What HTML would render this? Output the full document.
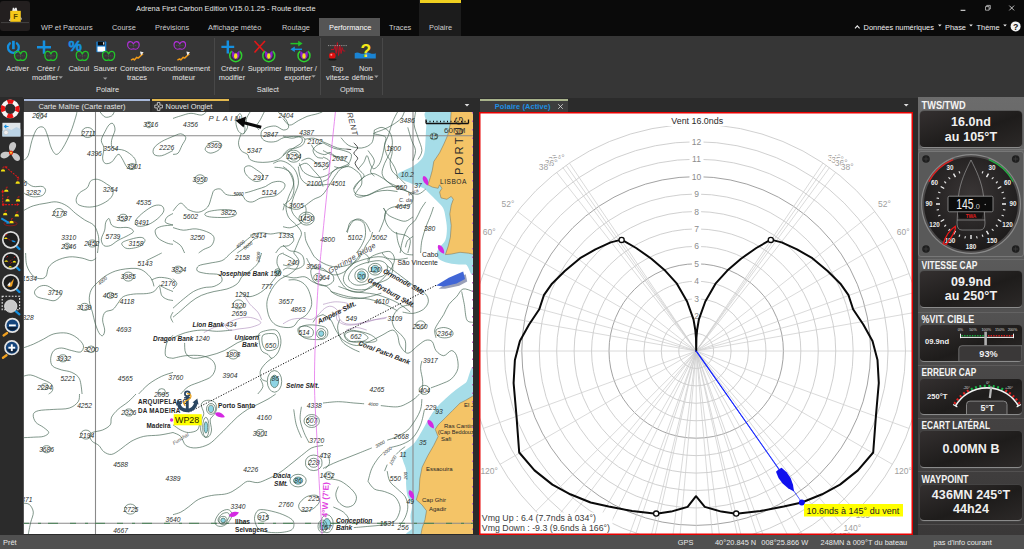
<!DOCTYPE html>
<html><head><meta charset="utf-8"><title>Adrena</title>
<style>
*{box-sizing:border-box;margin:0;padding:0}
html,body{width:1024px;height:549px;overflow:hidden;background:#2b2b2b;font-family:"Liberation Sans","DejaVu Sans",sans-serif;}
.abs{position:absolute}
#title{left:0;top:0;width:1024px;height:36px;background:#0a0a0a}
#title .t{position:absolute;color:#e6e6e6;font-size:7.4px;white-space:nowrap}
.tab{position:absolute;top:18.6px;height:18px;line-height:18px;color:#cfcfcf;font-size:7.4px;text-align:center;white-space:nowrap}
#ribbon{left:0;top:36px;width:1024px;height:61.6px;background:#363636}
.rl{position:absolute;color:#e4e4e4;font-size:7.4px;line-height:9px;text-align:center;white-space:nowrap;transform:translateX(-50%)}
.sep{position:absolute;top:38px;width:1px;height:57px;background:#4a4a4a}
#left{left:0;top:97px;width:23px;height:437px;background:#2b2b2b}
#status{left:0;top:535px;width:1024px;height:14px;background:#505050;color:#e8e8e8;font-size:7.4px;line-height:16.6px}
#status span{position:absolute;white-space:nowrap}
.rh{position:absolute;left:3.5px;color:#f4f4f4;font-weight:bold;font-size:9.4px;line-height:11px;letter-spacing:-0.36px;white-space:nowrap;transform:scaleY(1.12);transform-origin:left center}
.rb{position:absolute;left:2px;width:102px;border-radius:4px;background:linear-gradient(160deg,#343030 0%,#1e1c1b 55%,#2c2928 100%);border-bottom:1px solid #8a8a8a;box-shadow:0 0 0 0.5px #4a4a4a;overflow:hidden}
.rv{position:absolute;left:0;width:102px;text-align:center;color:#f0f0f0;font-weight:bold;line-height:16px;white-space:nowrap;letter-spacing:0.1px}
.ts{color:#e6e6e6;font-size:7.4px;line-height:10px;white-space:nowrap}
</style></head><body>
<div id="title" class="abs">
 <div class="abs" style="left:0;top:1px;width:30px;height:30px;background:#231f1f;border-radius:3px"></div>
 <svg class="abs" style="left:0;top:0" width="32" height="34" viewBox="0 0 32 34"><path d="M1 22.6H29" stroke="#5c5c5c" stroke-width="0.6"/><path d="M12.2 11L12.8 7.8H14.2L14.6 9.6L15.2 7.8H16.6L17.4 11Z" fill="#eee"/><rect x="10.2" y="10.8" width="10.6" height="11" fill="#f7c81a"/><path d="M9 21l1.4 -3.5v3.5zM22 19.5l-1.3 -3v3z" fill="#ddd"/><text x="15.4" y="19.4" font-size="7.4" font-weight="bold" fill="#5a4600" text-anchor="middle">F</text></svg>
 <div class="t" style="left:136px;top:4.2px">Adrena First Carbon Edition V15.0.1.25 - Route directe</div>
 <div class="abs" style="left:319px;top:18px;width:61px;height:18px;background:#555"></div>
 <div class="abs" style="left:419px;top:0;width:42px;height:36px;background:#1c1c1c"></div>
 <div class="abs" style="left:419.5px;top:0;width:41.5px;height:2.5px;background:#f0d020"></div>
 <div class="tab" style="left:41px;">WP et Parcours</div>
 <div class="tab" style="left:112px;">Course</div>
 <div class="tab" style="left:155px;">Prévisions</div>
 <div class="tab" style="left:208px;">Affichage météo</div>
 <div class="tab" style="left:282px;">Routage</div>
 <div class="tab" style="left:329px;color:#fff">Performance</div>
 <div class="tab" style="left:389px;">Traces</div>
 <div class="tab" style="left:429px;">Polaire</div>

 <svg class="abs" style="left:840px;top:0" width="184" height="36" viewBox="840 0 184 36"><path d="M960.6 10.3H965.4" stroke="#eee" stroke-width="1"/><path d="M985.5 6.6h3.6v3.6h-3.6zM986.7 6.6V5.4H990.3V9H989.1" fill="none" stroke="#ddd" stroke-width="0.7"/><path d="M1009.3 5.6L1014.1 10.4M1014.1 5.6L1009.3 10.4" stroke="#eee" stroke-width="0.8"/>
 <path d="M855 28.3L857.3 25.8L859.6 28.3" fill="none" stroke="#eee" stroke-width="1.1"/>
 <path d="M938 24.6h3.6l-1.8 2zM969.2 24.6h3.6l-1.8 2zM1003.2 24.6h3.6l-1.8 2z" fill="#eee"/>
 <circle cx="1015.6" cy="26.4" r="5" fill="#f4f4f4"/><text x="1015.6" y="29.6" font-size="8.8" font-weight="bold" fill="#111" text-anchor="middle">?</text></svg>
 <div class="t" style="left:863.6px;top:22.6px;color:#f0f0f0">Données numériques</div>
 <div class="t" style="left:945px;top:22.6px;color:#f0f0f0">Phase</div>
 <div class="t" style="left:976.6px;top:22.6px;color:#f0f0f0">Thème</div>
</div>
<div id="ribbon" class="abs"><svg class="abs" style="left:0;top:0" width="420" height="61" viewBox="0 36 420 61">
<path d="M9.9 43.3A5.4 5.4 0 1 0 16.9 43.3" fill="none" stroke="#1590e0" stroke-width="2.3" stroke-linecap="round"/><path d="M13.4 40.8V49.2" stroke="#1590e0" stroke-width="2.7" stroke-linecap="butt"/>
<path d="M20.60 54.10C21.80 50.20 26.70 50.20 26.70 55.20C26.70 59.20 23.60 61.40 20.60 59.90C17.60 61.40 14.50 59.20 14.50 55.20C14.50 50.20 19.40 50.20 20.60 54.10Z" fill="none" stroke="#22c32a" stroke-width="1.3" stroke-linejoin="round"/><path d="M16.60 55.80H24.60M20.60 54.20V58.80" stroke="#5c5c5c" stroke-width="0.6" stroke-dasharray="1.2 0.6"/>
<path d="M37 47.25H51M44 40.4V53.8" stroke="#1590e0" stroke-width="2.5"/>
<path d="M50.90 54.10C52.10 50.20 57.00 50.20 57.00 55.20C57.00 59.20 53.90 61.40 50.90 59.90C47.90 61.40 44.80 59.20 44.80 55.20C44.80 50.20 49.70 50.20 50.90 54.10Z" fill="none" stroke="#22c32a" stroke-width="1.3" stroke-linejoin="round"/><path d="M46.90 55.80H54.90M50.90 54.20V58.80" stroke="#5c5c5c" stroke-width="0.6" stroke-dasharray="1.2 0.6"/>
<text x="75.1" y="51" font-size="15.4" font-weight="bold" fill="#1590e0" stroke="#1590e0" stroke-width="0.5" text-anchor="middle" textLength="13.4" lengthAdjust="spacingAndGlyphs">%</text>
<path d="M82.30 54.10C83.50 50.20 88.40 50.20 88.40 55.20C88.40 59.20 85.30 61.40 82.30 59.90C79.30 61.40 76.20 59.20 76.20 55.20C76.20 50.20 81.10 50.20 82.30 54.10Z" fill="none" stroke="#22c32a" stroke-width="1.3" stroke-linejoin="round"/><path d="M78.30 55.80H86.30M82.30 54.20V58.80" stroke="#5c5c5c" stroke-width="0.6" stroke-dasharray="1.2 0.6"/>
<rect x="96.3" y="41.6" width="10" height="10.6" rx="0.6" fill="#1a7fd0"/><rect x="97.8" y="41.6" width="7" height="3.8" fill="#0a0a0a"/><rect x="103" y="42.2" width="1.3" height="2.4" fill="#ddd"/><rect x="97.5" y="46.6" width="7.6" height="5" fill="#fff"/>
<path d="M108.60 54.10C109.80 50.20 114.70 50.20 114.70 55.20C114.70 59.20 111.60 61.40 108.60 59.90C105.60 61.40 102.50 59.20 102.50 55.20C102.50 50.20 107.40 50.20 108.60 54.10Z" fill="none" stroke="#22c32a" stroke-width="1.3" stroke-linejoin="round"/><path d="M104.60 55.80H112.60M108.60 54.20V58.80" stroke="#5c5c5c" stroke-width="0.6" stroke-dasharray="1.2 0.6"/>
<path d="M133.40 43.98C134.54 40.71 139.20 40.71 139.20 44.90C139.20 48.24 136.25 50.09 133.40 48.83C130.55 50.09 127.60 48.24 127.60 44.90C127.60 40.71 132.26 40.71 133.40 43.98Z" fill="none" stroke="#b030d8" stroke-width="1.1" stroke-linejoin="round"/><path d="M129.60 45.40H137.20M133.40 44.06V47.91" stroke="#5c5c5c" stroke-width="0.6" stroke-dasharray="1.2 0.6"/>
<path d="M131 60.1l2.2 -1.2l1.2 1l2.4 -2.6l1.4 0.8l2.8 -2.6l2 -1.6" fill="none" stroke="#f09a18" stroke-width="1.5" stroke-linejoin="round"/><path d="M140 51.6l3.6 0.6l-2.6 3.2z" fill="#eee"/>
<path d="M179.80 43.98C180.94 40.71 185.60 40.71 185.60 44.90C185.60 48.24 182.65 50.09 179.80 48.83C176.95 50.09 174.00 48.24 174.00 44.90C174.00 40.71 178.66 40.71 179.80 43.98Z" fill="none" stroke="#b030d8" stroke-width="1.1" stroke-linejoin="round"/><path d="M176.00 45.40H183.60M179.80 44.06V47.91" stroke="#5c5c5c" stroke-width="0.6" stroke-dasharray="1.2 0.6"/>
<path d="M177.4 60.1l2.2 -1.2l1.2 1l2.4 -2.6l1.4 0.8l2.8 -2.6l2 -1.6" fill="none" stroke="#f09a18" stroke-width="1.5" stroke-linejoin="round"/><path d="M186.4 51.6l3.6 0.6l-2.6 3.2z" fill="#eee"/>
<path d="M221.4 46.9H234.2M227.8 40.4V53.6" stroke="#1590e0" stroke-width="2.4"/>
<path d="M231.79999999999998 51.1A6 6 0 1 0 239.6 51.1" fill="none" stroke="#2fd030" stroke-width="1.5"/><path d="M232.29999999999998 50.8Q230.7 56.4 234.5 59.4L235.7 53.9ZM239.1 50.8Q240.7 56.4 236.89999999999998 59.4L235.7 53.9Z" fill="#8a20d0"/><ellipse cx="235.7" cy="56.199999999999996" rx="1.7" ry="2.9" fill="#f5e020"/>
<path d="M254.5 41L265 52.5M265 41L254.5 52.5" stroke="#e01818" stroke-width="1.6"/>
<path d="M264.90000000000003 51.1A6 6 0 1 0 272.7 51.1" fill="none" stroke="#2fd030" stroke-width="1.5"/><path d="M265.40000000000003 50.8Q263.8 56.4 267.6 59.4L268.8 53.9ZM272.2 50.8Q273.8 56.4 270.0 59.4L268.8 53.9Z" fill="#8a20d0"/><ellipse cx="268.8" cy="56.199999999999996" rx="1.7" ry="2.9" fill="#f5e020"/>
<path d="M290.5 43.6H299.5" stroke="#22c32a" stroke-width="1.5"/><path d="M298.2 40.8L302.6 43.6L298.2 46.4Z" fill="#22c32a"/>
<path d="M293.5 49.3H302" stroke="#1590e0" stroke-width="1.5"/><path d="M294.8 46.5L290.4 49.3L294.8 52.1Z" fill="#1590e0"/>
<path d="M300.1 51.1A6 6 0 1 0 307.9 51.1" fill="none" stroke="#2fd030" stroke-width="1.5"/><path d="M300.6 50.8Q299 56.4 302.8 59.4L304 53.9ZM307.4 50.8Q309 56.4 305.2 59.4L304 53.9Z" fill="#8a20d0"/><ellipse cx="304" cy="56.199999999999996" rx="1.7" ry="2.9" fill="#f5e020"/>
<path d="M331 49.5h3l1 -4l1.2 8l1.2 -11l1.2 13l1.3 -10l1.2 8l1 -6l1.2 3.5h2" fill="none" stroke="#c01020" stroke-width="0.9"/><path d="M328 45.6H347" stroke="#bbb" stroke-width="0.7" stroke-dasharray="1.2 1"/>
<circle cx="332.3" cy="55.8" r="3.3" fill="#e01010"/><circle cx="331.3" cy="54.8" r="1" fill="#ff9a9a"/><ellipse cx="332.5" cy="59.6" rx="4" ry="1" fill="#1a1a1a"/>
<path d="M354.7 53.2q2.6 -1.2 5.2 0t5.2 0t5.2 0t5.5 0V58.4H354.7Z" fill="#1a84d4"/>
<text x="365.8" y="56.6" font-size="17.5" font-weight="bold" fill="#f5e818" text-anchor="middle">?</text>
<path d="M58.5 76.3h4.4l-2.2 2.4z" fill="#9a9a9a"/>
<path d="M103.0 77.39999999999999h4.4l-2.2 2.4z" fill="#9a9a9a"/>
<path d="M311.3 75.3h4.4l-2.2 2.4z" fill="#9a9a9a"/>
<path d="M374.1 75.6h4.4l-2.2 2.4z" fill="#9a9a9a"/>
</svg>
<div class="rl" style="left:17.6px;top:28.3px">Activer</div>
<div class="rl" style="left:48.2px;top:28.3px">Créer /</div>
<div class="rl" style="left:45.2px;top:36.5px">modifier</div>
<div class="rl" style="left:78.8px;top:28.3px">Calcul</div>
<div class="rl" style="left:105.2px;top:28.3px">Sauver</div>
<div class="rl" style="left:137px;top:28.3px">Correction</div>
<div class="rl" style="left:137px;top:36.5px">traces</div>
<div class="rl" style="left:183.6px;top:28.3px">Fonctionnement</div>
<div class="rl" style="left:183.8px;top:36.5px">moteur</div>
<div class="rl" style="left:107.5px;top:48.6px">Polaire</div>
<div class="rl" style="left:232.2px;top:28.3px">Créer /</div>
<div class="rl" style="left:232px;top:36.5px">modifier</div>
<div class="rl" style="left:264.7px;top:28.3px">Supprimer</div>
<div class="rl" style="left:301px;top:28.3px">Importer /</div>
<div class="rl" style="left:297.7px;top:36.5px">exporter</div>
<div class="rl" style="left:267.8px;top:48.6px">Sailect</div>
<div class="rl" style="left:337.5px;top:28.3px">Top</div>
<div class="rl" style="left:337.6px;top:36.5px">vitesse</div>
<div class="rl" style="left:365.7px;top:28.3px">Non</div>
<div class="rl" style="left:362.6px;top:36.5px">définie</div>
<div class="rl" style="left:352px;top:48.6px">Optima</div>
<div class="abs" style="left:214.0px;top:2px;width:1px;height:57px;background:#484848"></div>
<div class="abs" style="left:320.2px;top:2px;width:1px;height:57px;background:#484848"></div>
<div class="abs" style="left:382.0px;top:2px;width:1px;height:57px;background:#484848"></div></div>
<div id="left" class="abs"><svg class="abs" style="left:0;top:0" width="23" height="437" viewBox="0 97 23 437">
<circle cx="10.2" cy="108.8" r="7.3" fill="none" stroke="#f4f4f4" stroke-width="4.2"/>
<circle cx="10.2" cy="108.8" r="7.3" fill="none" stroke="#e81010" stroke-width="4.2" stroke-dasharray="5.733 5.733" stroke-dashoffset="2.87"/>
<rect x="2.4" y="122.8" width="18" height="13.6" fill="#dfe6ea"/><path d="M2.4 131l5 -3l4 2l5 -3l4 2v7.4H2.4z" fill="#bcd4e6"/><path d="M8.5 126.5H4.8M6.3 124.8L4.6 126.5L6.3 128.2" stroke="#1590e0" stroke-width="1.2" fill="none"/><circle cx="6" cy="132.5" r="2.2" fill="#f0f0f0" stroke="#bbb" stroke-width="0.5"/>
<g transform="translate(11 152.8) scale(1.15)"><path d="M0 0C-3 -4 -2 -9 2 -9.5C6 -9 5 -3 0 0Z" fill="#c8c8c8"/><path d="M0 0C5 -0.6 9 2.5 7.5 6.2C4.5 9 1 4.5 0 0Z" fill="#c8c8c8"/><path d="M0 0C-2 4.6 -6.6 6.6 -9 3.5C-10 -0.6 -4.6 -2 0 0Z" fill="#c8c8c8"/><circle r="1.9" fill="#e03010"/><circle r="0.9" fill="#f8d040"/></g>
<path d="M5.9 167.2L18.4 177.7" stroke="#e01818" stroke-width="1.1" stroke-dasharray="1.8 1.3" fill="none"/><path d="M4.6 166.2l3 0.4l-1.6 1.9zM19.4 178.6l-3 -0.5l1.7 -1.9z" fill="#e01818"/><path d="M0.8 171.6a2.2 2.4 0 0 1 4.4 0z" fill="#f4e010"/><path d="M3 168.6v-1.6h1.6" stroke="#e01818" stroke-width="0.7" fill="none"/><path d="M15.5 183.7a2.2 2.4 0 0 1 4.4 0z" fill="#f4e010"/><path d="M17.7 180.70000000000002v-1.6h1.6" stroke="#e01818" stroke-width="0.7" fill="none"/>
<path d="M2.7 191.5V204.6H17.7" stroke="#e01818" stroke-width="1.1" stroke-dasharray="1.8 1.3" fill="none"/><path d="M2.7 189.6l1.5 2.6h-3zM19.4 204.6l-2.6 1.5v-3z" fill="#e01818"/><circle cx="3.2" cy="204.6" r="1.3" fill="#e01818"/><path d="M4.1 191.8a2.2 2.4 0 0 1 4.4 0z" fill="#f4e010"/><path d="M6.3 188.8v-1.6h1.6" stroke="#e01818" stroke-width="0.7" fill="none"/><path d="M5.4 201.4a2.2 2.4 0 0 1 4.4 0z" fill="#f4e010"/><path d="M7.6 198.4v-1.6h1.6" stroke="#e01818" stroke-width="0.7" fill="none"/><path d="M15.8 201.4a2.2 2.4 0 0 1 4.4 0z" fill="#f4e010"/><path d="M18 198.4v-1.6h1.6" stroke="#e01818" stroke-width="0.7" fill="none"/>
<path d="M3.0 215.2a2.2 2.4 0 0 1 4.4 0z" fill="#f4e010"/><path d="M5.2 212.20000000000002v-1.6h1.6" stroke="#e01818" stroke-width="0.7" fill="none"/><path d="M14.6 216.5a2.2 2.4 0 0 1 4.4 0z" fill="#f4e010"/><path d="M16.8 213.5v-1.6h1.6" stroke="#e01818" stroke-width="0.7" fill="none"/><ellipse cx="10.5" cy="223.6" rx="6.5" ry="2.2" fill="none" stroke="#a01818" stroke-width="0.8"/><path d="M9.3 223.2a2.2 2.4 0 0 1 4.4 0z" fill="#f4e010"/><path d="M11.5 220.20000000000002v-1.6h1.6" stroke="#e01818" stroke-width="0.7" fill="none"/><path d="M1.3 218.4L8 222.3" stroke="#1590e0" stroke-width="2"/><path d="M9.8 223.4l-3.6 0.4l1.8 -3z" fill="#1590e0"/>
<path d="M16.35 246.0L19.35 249.0" stroke="#1590e0" stroke-width="2.4" stroke-linecap="round"/><circle cx="10.75" cy="239.8" r="8" fill="#1e1e1e" stroke="#dcdcdc" stroke-width="1.7"/><path d="M4.1 238.9a1.8 1.9 0 0 1 3.5 0z" fill="#f4e010"/><path d="M5.9 236v-1.4h1.4" stroke="#e01818" stroke-width="0.7" fill="none"/><path d="M7.5 238.6L11.5 241" stroke="#e01818" stroke-width="0.8" stroke-dasharray="1.2 0.9" fill="none"/><path d="M11.3 240.4q3 -0.6 4.6 1.6q-2.6 1.2 -4.6 -1.6z" fill="#1590e0"/>
<path d="M16.35 267.0L19.35 270.0" stroke="#1590e0" stroke-width="2.4" stroke-linecap="round"/><circle cx="10.75" cy="260.8" r="8" fill="#1e1e1e" stroke="#dcdcdc" stroke-width="1.7"/><path d="M4.4 261.8a1.9 2.0 0 0 1 3.7 0z" fill="#f4e010"/><path d="M12.5 262.4a1.9 2.0 0 0 1 3.7 0z" fill="#f4e010"/><path d="M8.3 267.6a1.9 2.0 0 0 1 3.7 0z" fill="#f4e010"/><path d="M6.5 257.5L8 256M14 258l1 -1.4M10.5 263.4l1.4 -1.2" stroke="#e01818" stroke-width="0.8"/><path d="M8.5 262L12.5 259.5" stroke="#e01818" stroke-width="0.7" stroke-dasharray="1 0.8"/>
<path d="M16.35 289.0L19.35 292.0" stroke="#1590e0" stroke-width="2.4" stroke-linecap="round"/><circle cx="10.75" cy="282.8" r="8" fill="#1e1e1e" stroke="#dcdcdc" stroke-width="1.7"/><path d="M7.6 286.6L14 278.6L12 286.2Q9.6 287.6 7.6 286.6Z" fill="#f0a020"/><path d="M7 285.4L10.4 281.6L10 285.8Z" fill="#f4f4f4"/>
<rect x="2.2" y="296.2" width="17.4" height="13.6" fill="none" stroke="#ececec" stroke-width="1.1" stroke-dasharray="1.7 1.5"/><path d="M15.6 311.2L19.4 314.4" stroke="#1590e0" stroke-width="2.2" stroke-linecap="round"/><circle cx="10.75" cy="306.2" r="6.2" fill="#c8c8c8" stroke="#e6e6e6" stroke-width="0.8"/>
<path d="M7.1000000000000005 333.0L3.5999999999999996 335.4" stroke="#f0a020" stroke-width="2.4" stroke-linecap="round"/><circle cx="12.4" cy="325.4" r="6.8" fill="#15457c" stroke="#e4e4e4" stroke-width="1.7"/><path d="M7.4 326.9a5.4 5.4 0 0 0 10 0z" fill="#0c2038"/><path d="M9.0 325.4H15.8" stroke="#fff" stroke-width="1.9"/>
<path d="M6.500000000000001 355.3L3.0 357.7" stroke="#f0a020" stroke-width="2.4" stroke-linecap="round"/><circle cx="11.8" cy="347.7" r="6.8" fill="#15457c" stroke="#e4e4e4" stroke-width="1.7"/><path d="M6.800000000000001 349.2a5.4 5.4 0 0 0 10 0z" fill="#0c2038"/><path d="M8.4 347.7H15.200000000000001" stroke="#fff" stroke-width="1.9"/><path d="M11.8 344.3V351.09999999999997" stroke="#fff" stroke-width="1.9"/>
</svg></div>
<!-- MAP -->
<div id="map" class="abs" style="left:23px;top:112px;width:450px;height:422px;background:#fff;overflow:hidden"><svg class="abs" style="left:0;top:0" width="450" height="422" viewBox="0 0 450 422" font-family="Liberation Sans, sans-serif">
<path d="M405.5 -1.5C397.5 0.7 404.0 7.0 403.5 11.6C403.0 16.3 402.9 21.3 402.6 26.2C402.3 31.1 402.3 37.1 401.4 40.8C400.6 44.4 399.5 45.9 397.7 48.0C395.8 50.2 393.0 52.2 390.4 53.9C387.7 55.6 384.2 56.9 381.6 58.2C379.1 59.5 376.0 60.4 375.2 61.7C374.5 63.1 375.7 65.0 377.3 66.4C378.8 67.7 381.9 68.7 384.6 69.9C387.2 71.0 390.6 72.3 393.3 73.4C396.0 74.4 398.4 74.9 400.6 76.3C402.8 77.6 404.2 79.4 406.4 81.5C408.6 83.6 411.4 86.4 413.7 88.8C415.9 91.2 418.6 93.4 420.1 96.1C421.5 98.7 421.8 101.4 422.4 104.8C423.0 108.2 423.9 112.6 423.9 116.4C423.9 120.3 423.6 124.9 422.4 128.1C421.2 131.2 418.0 133.2 416.6 135.4C415.1 137.6 413.8 139.3 413.7 141.2C413.6 143.1 414.5 145.5 416.0 147.0C417.5 148.5 419.9 149.4 422.4 150.2C424.9 151.0 427.7 151.6 431.1 152.0C434.5 152.4 439.4 152.6 442.8 152.5C446.2 152.5 450.1 177.0 451.5 151.4C453.0 125.7 459.2 24.0 451.5 -1.5C443.8 -26.9 413.5 -3.6 405.5 -1.5Z" fill="#a6dde8"/>
<path d="M451.5 265.5C450.1 240.0 445.9 268.6 442.8 270.7C439.6 272.8 436.0 275.3 432.6 278.0C429.2 280.7 425.6 283.8 422.4 286.7C419.2 289.7 416.3 292.3 413.7 295.5C411.0 298.6 408.8 301.8 406.4 305.7C404.0 309.5 401.5 314.6 399.1 318.8C396.7 322.9 394.5 327.3 391.8 330.4C389.2 333.6 385.3 335.8 383.1 337.7C380.9 339.6 379.2 340.1 378.7 342.1C378.2 344.0 379.5 346.7 380.2 349.3C380.9 352.0 382.6 354.2 383.1 358.1C383.6 362.0 382.9 368.3 383.1 372.6C383.3 377.0 383.6 380.9 384.6 384.3C385.5 387.7 388.4 389.6 388.9 393.0C389.4 396.4 387.5 400.8 387.5 404.6C387.5 408.5 388.9 413.1 388.9 416.3C388.9 419.4 377.0 422.4 387.5 423.6C397.9 424.8 440.8 449.9 451.5 423.6C462.2 397.2 453.0 291.0 451.5 265.5Z" fill="#a6dde8"/>
<path d="M428.2 -1.5L427.4 11.6L424.7 23.3L420.9 32.0L416.6 40.8L410.8 49.5L409.3 58.2L407.3 65.5L404.9 72.8L409.3 75.1L415.1 76.3L416.6 72.8L418.9 76.3L416.6 80.1L418.0 85.9L423.9 87.3L428.2 84.4L430.3 87.3L428.2 93.2L426.8 101.9L428.2 113.5L427.4 125.2L425.3 133.9L422.4 142.6L428.2 142.1L437.0 140.3L445.7 141.2L451.5 142.6L451.5 -1.5Z" fill="#f4c467"/>
<path d="M451.5 283.0L442.8 288.2L437.0 291.1L429.7 298.4L422.4 305.7L415.1 312.9L412.2 317.3L415.1 324.6L410.8 333.3L404.9 343.5L399.1 355.2L396.8 366.8L396.2 378.4L393.3 387.8L399.1 393.0L403.5 398.8L402.0 407.6L399.1 416.3L397.7 423.6L451.5 423.6Z" fill="#f4c467"/>
<path d="M428.2 -1.5L427.4 11.6L424.7 23.3L420.9 32.0L416.6 40.8L410.8 49.5L409.3 58.2L407.3 65.5L404.9 72.8L409.3 75.1L415.1 76.3L416.6 72.8L418.9 76.3L416.6 80.1L418.0 85.9L423.9 87.3L428.2 84.4L430.3 87.3L428.2 93.2L426.8 101.9L428.2 113.5L427.4 125.2L425.3 133.9L422.4 142.6L428.2 142.1L437.0 140.3L445.7 141.2L451.5 142.6L451.5 -1.5Z" fill="none" stroke="#7a6a4a" stroke-width="0.5" stroke-linejoin="round"/>
<path d="M451.5 283.0L442.8 288.2L437.0 291.1L429.7 298.4L422.4 305.7L415.1 312.9L412.2 317.3L415.1 324.6L410.8 333.3L404.9 343.5L399.1 355.2L396.8 366.8L396.2 378.4L393.3 387.8L399.1 393.0L403.5 398.8L402.0 407.6L399.1 416.3L397.7 423.6L451.5 423.6Z" fill="none" stroke="#7a6a4a" stroke-width="0.5" stroke-linejoin="round"/>
<path d="M72.5 0V422M390 0V422M0 23.8H450M0 411.3H450" stroke="#8a8a8a" stroke-width="1.1" fill="none"/>
<path d="M0 411.3H450" stroke="#3a7a4a" stroke-width="0.9" stroke-dasharray="6 9 3 7 10 12" fill="none"/>
<ellipse cx="251.5" cy="269.4" rx="4.1" ry="6.2" fill="#8fd4e4"/>
<ellipse cx="254.8" cy="160.3" rx="1.8" ry="2.1" fill="#8fd4e4"/>
<ellipse cx="338.5" cy="163.6" rx="3.9" ry="3.9" fill="#8fd4e4"/>
<ellipse cx="352.1" cy="157.2" rx="3.9" ry="3.3" fill="#8fd4e4"/>
<ellipse cx="275.1" cy="368.6" rx="4.6" ry="3.6" fill="#8fd4e4"/>
<ellipse cx="188.0" cy="296.9" rx="2.6" ry="3.1" fill="#8fd4e4"/>
<ellipse cx="182.9" cy="315.4" rx="1.8" ry="5.7" fill="#8fd4e4"/>
<ellipse cx="200.1" cy="408.4" rx="2.3" ry="2.3" fill="#8fd4e4"/>
<ellipse cx="299.5" cy="414.3" rx="2.6" ry="3.6" fill="#8fd4e4"/>
<ellipse cx="303.9" cy="411.7" rx="3.6" ry="5.1" fill="#8fd4e4"/>
<ellipse cx="298.2" cy="221.6" rx="2.6" ry="2.8" fill="#8fd4e4"/>
<path d="M0.0 48.8C0.9 47.9 3.6 47.1 5.1 43.7C6.6 40.2 7.5 32.8 9.0 28.3C10.5 23.8 12.2 18.8 14.1 16.7C16.1 14.6 18.8 14.3 20.5 15.4C22.3 16.5 23.1 19.7 24.4 23.1C25.7 26.5 26.8 32.8 28.3 36.0C29.8 39.2 31.5 42.4 33.4 42.4C35.3 42.4 37.5 39.6 39.8 36.0C42.2 32.3 45.4 25.7 47.5 20.5C49.7 15.4 51.6 8.6 52.7 5.1C53.7 1.7 53.7 0.9 53.9 0.0M86.1 12.8C87.3 11.6 88.9 10.7 89.9 11.6C90.9 12.4 92.2 15.2 92.0 18.0C91.7 20.8 89.0 25.3 88.6 28.3C88.3 31.3 87.8 34.2 89.9 36.0C92.0 37.7 98.0 37.0 101.5 38.5C104.9 40.0 108.5 42.8 110.5 45.0C112.4 47.1 113.2 49.4 113.0 51.4C112.8 53.4 110.7 56.4 109.2 57.0C107.7 57.7 105.7 57.0 104.0 55.2C102.3 53.4 100.4 48.4 98.9 46.2C97.4 44.1 96.8 41.7 95.0 42.4C93.3 43.0 90.8 48.6 88.6 50.1C86.5 51.6 83.7 52.0 82.2 51.4C80.7 50.7 79.8 48.8 79.6 46.2C79.4 43.7 81.1 39.0 80.9 36.0C80.7 33.0 78.1 31.0 78.3 28.3C78.6 25.5 80.9 21.8 82.2 19.3C83.5 16.7 84.8 14.1 86.1 12.8ZM77.1 0.0C77.9 0.9 80.3 4.5 82.2 5.1C84.1 5.8 87.1 4.7 88.6 3.9C90.1 3.0 90.8 0.6 91.2 0.0M150.0 24.4C148.1 25.3 141.9 27.6 138.7 29.5C135.5 31.5 132.3 33.8 131.0 36.0C129.7 38.1 129.7 41.1 131.0 42.4C132.3 43.7 135.5 44.3 138.7 43.7C141.9 43.0 148.1 39.4 150.0 38.5M0.0 66.8C0.6 67.4 2.1 69.4 3.9 70.6C5.6 71.9 7.7 73.9 10.3 74.5C12.8 75.1 17.2 73.9 19.3 74.5C21.3 75.1 22.6 76.8 22.6 78.3C22.6 79.8 21.3 82.4 19.3 83.5C17.2 84.6 13.1 85.0 10.3 84.8C7.5 84.6 4.3 83.1 2.6 82.2C0.9 81.3 0.4 80.1 0.0 79.6M71.9 67.3C73.6 67.1 75.1 67.3 77.1 68.1C79.0 68.8 81.6 70.6 83.5 71.9C85.4 73.2 87.6 74.1 88.6 75.8C89.7 77.5 90.5 80.1 89.9 82.2C89.3 84.3 87.3 86.7 84.8 88.6C82.2 90.5 77.9 92.7 74.5 93.8C71.1 94.8 67.4 95.3 64.2 95.0C61.0 94.8 57.1 93.8 55.2 92.5C53.4 91.2 53.0 89.3 53.2 87.3C53.4 85.4 54.7 82.8 56.5 80.9C58.4 79.0 62.4 77.7 64.2 75.8C66.0 73.9 66.0 70.8 67.3 69.4C68.6 67.9 70.3 67.5 71.9 67.3ZM0.0 98.9C1.7 98.0 6.4 95.0 10.3 93.8C14.1 92.5 19.3 91.8 23.1 91.2C27.0 90.5 30.0 89.5 33.4 89.9C36.8 90.3 40.5 91.8 43.7 93.8C46.9 95.7 49.7 99.1 52.7 101.5C55.7 103.8 58.7 106.0 61.6 107.9C64.6 109.8 68.5 110.9 70.6 113.0C72.8 115.2 73.6 118.2 74.5 120.7C75.3 123.3 75.8 125.1 75.8 128.4C75.8 131.8 74.7 138.9 74.5 141.0M86.1 106.6C87.0 107.0 87.1 111.5 88.6 113.0C90.1 114.5 92.3 115.2 95.0 115.6C97.8 116.0 102.7 114.9 105.3 115.6C107.9 116.2 110.5 118.2 110.5 119.4C110.5 120.7 107.9 121.8 105.3 123.3C102.7 124.8 98.0 126.7 95.0 128.4C92.0 130.1 89.7 132.7 87.3 133.6C85.0 134.4 82.4 134.6 80.9 133.6C79.4 132.5 78.2 129.7 78.3 127.2C78.5 124.6 81.0 120.9 81.7 118.2C82.4 115.4 82.0 112.4 82.7 110.5C83.4 108.5 85.1 106.2 86.1 106.6ZM113.0 107.9C114.3 105.7 117.7 102.5 120.7 100.2C123.7 97.8 128.0 94.8 131.0 93.8C134.0 92.7 137.1 92.9 138.7 93.8C140.3 94.6 141.2 97.0 140.8 98.9C140.3 100.8 138.4 103.2 136.1 105.3C133.9 107.5 130.1 110.2 127.2 111.7C124.2 113.2 120.5 114.1 118.2 114.3C115.8 114.5 113.9 114.1 113.0 113.0C112.2 112.0 111.7 110.0 113.0 107.9ZM98.9 131.0C99.8 129.5 104.7 128.1 107.9 127.2C111.1 126.2 115.8 125.1 118.2 125.4C120.5 125.6 122.0 127.1 122.0 128.4C122.0 129.8 120.1 132.3 118.2 133.6C116.2 134.9 113.0 135.7 110.5 136.1C107.9 136.6 104.7 137.0 102.7 136.1C100.8 135.3 98.0 132.5 98.9 131.0ZM150.0 101.5C149.0 102.1 145.1 103.8 143.8 105.3C142.6 106.8 141.5 109.2 142.6 110.5C143.6 111.7 148.8 112.6 150.0 113.0M150.0 113.0C148.1 113.2 141.7 113.5 138.7 114.3C135.8 115.2 132.9 116.2 132.3 118.2C131.6 120.1 132.9 123.7 134.9 125.9C136.8 128.0 141.3 129.9 143.8 131.0C146.4 132.1 149.0 132.1 150.0 132.3M13.2 3.9a3.5 3.0 0 1 0 7.1 0a3.5 3.0 0 1 0 -7.1 0M58.8 20.5a5.9 5.0 0 1 0 11.8 0a5.9 5.0 0 1 0 -11.8 0M30.6 101.0a5.3 4.5 0 1 0 10.6 0a5.3 4.5 0 1 0 -10.6 0M96.0 105.8a4.1 3.5 0 1 0 8.3 0a4.1 3.5 0 1 0 -8.3 0M41.2 134.1a3.0 2.5 0 1 0 5.9 0a3.0 2.5 0 1 0 -5.9 0M65.2 131.5a4.1 3.5 0 1 0 8.3 0a4.1 3.5 0 1 0 -8.3 0M105.6 54.5a3.5 3.0 0 1 0 7.1 0a3.5 3.0 0 1 0 -7.1 0M122.9 12.8a3.0 2.5 0 1 0 5.9 0a3.0 2.5 0 1 0 -5.9 0M150.0 6.4C151.3 6.0 154.7 4.7 157.7 3.9C160.7 3.0 164.6 1.4 168.0 1.3C171.4 1.2 175.7 3.3 178.3 3.1C180.8 2.9 182.5 0.5 183.4 0.0M150.0 24.4C151.3 24.0 155.6 21.6 157.7 21.8C159.8 22.0 162.6 23.8 162.8 25.7C163.1 27.6 160.3 30.8 159.0 33.4C157.7 36.0 156.6 39.6 155.1 41.1C153.6 42.6 150.9 42.2 150.0 42.4M182.1 37.2C182.1 35.5 185.1 32.1 187.2 30.8C189.4 29.5 193.0 29.1 195.0 29.5C196.9 30.0 198.8 31.9 198.8 33.4C198.8 34.9 196.9 37.2 195.0 38.5C193.0 39.8 189.4 41.3 187.2 41.1C185.1 40.9 182.1 39.0 182.1 37.2ZM215.5 2.6C214.6 3.9 212.9 7.5 212.9 10.3C212.9 13.1 214.2 17.3 215.5 19.3C216.8 21.2 219.6 22.5 220.6 21.8C221.7 21.2 222.1 17.8 221.9 15.4C221.7 13.1 220.0 9.8 219.4 7.7C218.7 5.6 218.7 3.4 218.1 2.6C217.4 1.7 216.4 1.3 215.5 2.6ZM227.1 0.0C226.4 1.3 223.6 5.1 223.2 7.7C222.8 10.3 224.9 13.1 224.5 15.4C224.1 17.8 221.3 20.8 220.6 21.8M218.1 21.8C217.6 23.3 215.5 28.0 215.5 30.8C215.5 33.6 216.6 36.6 218.1 38.5C219.6 40.5 223.0 40.9 224.5 42.4C226.0 43.9 225.3 46.2 227.1 47.5C228.8 48.8 231.8 49.7 234.8 50.1C237.8 50.5 241.6 50.5 245.0 50.1C248.5 49.7 252.3 49.0 255.3 47.5C258.3 46.0 260.5 43.0 263.0 41.1C265.6 39.2 268.2 37.7 270.7 36.0C273.3 34.2 277.2 32.5 278.4 30.8C279.7 29.1 279.7 26.8 278.4 25.7C277.2 24.6 273.7 24.4 270.7 24.4C267.7 24.4 263.5 24.8 260.5 25.7C257.5 26.5 255.5 28.9 252.7 29.5C250.0 30.2 246.1 30.2 243.8 29.5C241.4 28.9 239.5 27.4 238.6 25.7C237.8 24.0 237.8 21.0 238.6 19.3C239.5 17.6 241.4 16.3 243.8 15.4C246.1 14.6 250.0 13.7 252.7 14.1C255.5 14.6 258.3 17.8 260.5 18.0C262.6 18.2 265.2 17.1 265.6 15.4C266.0 13.7 264.3 9.8 263.0 7.7C261.7 5.6 259.2 3.9 257.9 2.6C256.6 1.3 255.7 0.4 255.3 0.0M241.2 0.0C240.5 1.3 238.6 5.4 237.3 7.7C236.1 10.1 233.7 12.4 233.5 14.1C233.3 15.8 235.6 17.3 236.1 18.0M221.9 55.2C222.8 54.2 225.1 53.5 227.1 53.9C229.0 54.4 231.3 56.3 233.5 57.8C235.6 59.3 239.0 61.2 239.9 62.9C240.8 64.6 239.9 67.0 238.6 68.1C237.3 69.1 234.3 69.8 232.2 69.4C230.1 68.9 227.5 67.0 225.8 65.5C224.1 64.0 222.6 62.1 221.9 60.4C221.3 58.7 221.1 56.3 221.9 55.2ZM150.0 98.9C151.3 97.6 155.1 91.4 157.7 91.2C160.3 91.0 162.4 96.1 165.4 97.6C168.4 99.1 172.5 100.6 175.7 100.2C178.9 99.8 182.5 97.6 184.7 95.0C186.8 92.5 187.5 87.6 188.5 84.8C189.6 82.0 189.6 79.6 191.1 78.3C192.6 77.1 195.6 76.4 197.5 77.1C199.4 77.7 200.5 81.1 202.7 82.2C204.8 83.3 207.8 83.5 210.4 83.5C212.9 83.5 215.9 81.3 218.1 82.2C220.2 83.1 221.3 87.3 223.2 88.6C225.1 89.9 227.3 90.3 229.6 89.9C232.0 89.5 234.8 86.9 237.3 86.1C239.9 85.2 242.5 85.2 245.0 84.8C247.6 84.3 250.2 84.8 252.7 83.5C255.3 82.2 259.0 79.0 260.5 77.1C262.0 75.1 262.4 73.2 261.7 71.9C261.1 70.6 258.7 69.6 256.6 69.4C254.5 69.1 251.3 69.8 248.9 70.6C246.5 71.5 244.8 73.4 242.5 74.5C240.1 75.6 237.3 76.2 234.8 77.1C232.2 77.9 229.2 79.0 227.1 79.6C224.9 80.3 222.8 80.7 221.9 80.9M251.5 55.2C253.0 55.4 257.7 55.4 260.5 56.5C263.2 57.6 266.4 59.1 268.2 61.6C269.9 64.2 271.2 68.1 270.7 71.9C270.3 75.8 266.9 80.9 265.6 84.8C264.3 88.6 263.0 91.6 263.0 95.0C263.0 98.5 263.9 102.3 265.6 105.3C267.3 108.3 271.2 110.5 273.3 113.0C275.4 115.6 278.0 118.2 278.4 120.7C278.9 123.3 277.2 125.1 275.9 128.4C274.6 131.8 271.6 138.9 270.7 141.0M250.2 51.4C251.5 50.9 255.1 48.6 257.9 48.8C260.7 49.0 264.3 50.7 266.9 52.7C269.4 54.6 271.9 57.2 273.3 60.4C274.7 63.6 275.8 67.9 275.4 71.9C274.9 76.0 271.9 80.9 270.7 84.8C269.5 88.6 268.2 92.0 268.2 95.0C268.2 98.0 269.2 100.4 270.7 102.7C272.2 105.1 276.1 108.1 277.2 109.2M182.1 101.5C183.0 100.6 185.3 99.5 188.5 98.9C191.7 98.3 197.5 97.6 201.4 97.6C205.2 97.6 209.7 98.0 211.6 98.9C213.6 99.8 214.0 101.7 212.9 102.7C211.9 103.8 208.9 104.9 205.2 105.3C201.6 105.7 194.7 105.5 191.1 105.3C187.5 105.1 184.9 104.7 183.4 104.0C181.9 103.4 181.3 102.3 182.1 101.5ZM150.0 115.6C151.7 116.0 156.4 117.9 160.3 118.2C164.1 118.4 168.8 116.4 173.1 116.9C177.4 117.3 183.0 119.2 186.0 120.7C189.0 122.2 190.7 123.7 191.1 125.9C191.5 128.0 190.2 131.6 188.5 133.6C186.8 135.5 183.0 136.2 180.8 137.4C178.7 138.7 176.5 140.4 175.7 141.0M150.0 128.4C151.3 129.3 155.8 131.5 157.7 133.6C159.6 135.7 160.9 139.8 161.6 141.0M227.1 123.3C228.8 122.9 233.9 120.9 237.3 120.7C240.8 120.5 244.2 122.0 247.6 122.0C251.0 122.0 254.5 120.5 257.9 120.7C261.3 120.9 266.0 122.0 268.2 123.3C270.3 124.6 271.2 126.7 270.7 128.4C270.3 130.1 267.7 132.5 265.6 133.6C263.5 134.6 260.0 133.6 257.9 134.9C255.7 136.1 253.6 140.0 252.7 141.0M207.8 141.0C209.3 139.8 214.0 135.9 216.8 133.6C219.6 131.3 222.4 128.9 224.5 127.2C226.6 125.4 228.8 123.9 229.6 123.3M214.2 141.0C215.9 139.8 221.7 135.9 224.5 133.6C227.3 131.3 229.2 128.4 230.9 127.2C232.6 125.9 234.1 126.1 234.8 125.9M275.9 53.9C277.2 53.5 281.0 50.5 283.6 51.4C286.1 52.2 288.9 56.5 291.3 59.1C293.6 61.6 296.2 64.2 297.7 66.8C299.2 69.4 299.6 73.2 300.0 74.5M300.0 30.8C299.0 31.3 295.5 32.1 293.8 33.4C292.2 34.7 290.0 36.6 290.0 38.5C290.0 40.5 292.2 43.7 293.8 45.0C295.5 46.2 299.0 46.0 300.0 46.2M278.4 48.8C279.7 48.4 283.6 45.8 286.1 46.2C288.7 46.7 291.5 49.9 293.8 51.4C296.2 52.9 299.0 54.6 300.0 55.2M171.7 67.3a5.3 4.5 0 1 0 10.6 0a5.3 4.5 0 1 0 -10.6 0M278.3 106.6a5.3 4.5 0 1 0 10.6 0a5.3 4.5 0 1 0 -10.6 0M275.9 106.6a7.7 6.5 0 1 0 15.4 0a7.7 6.5 0 1 0 -15.4 0M266.3 44.2a4.4 3.8 0 1 0 8.9 0a4.4 3.8 0 1 0 -8.9 0M263.6 44.2a7.1 6.0 0 1 0 14.2 0a7.1 6.0 0 1 0 -14.2 0M374.5 0.0C373.6 1.7 370.9 6.4 369.4 10.3C367.9 14.1 366.8 19.3 365.5 23.1C364.2 27.0 361.9 30.0 361.6 33.4C361.4 36.8 362.9 40.7 364.2 43.7C365.5 46.7 367.9 48.8 369.4 51.4C370.9 53.9 372.4 56.5 373.2 59.1C374.1 61.6 374.3 65.5 374.5 66.8M392.5 0.0C392.3 2.1 390.8 8.6 391.2 12.8C391.6 17.1 393.8 21.4 395.0 25.7C396.3 30.0 398.9 34.9 398.9 38.5C398.9 42.2 395.7 46.0 395.0 47.5M384.8 15.4C385.4 17.6 387.3 24.4 388.6 28.3C389.9 32.1 392.3 35.1 392.5 38.5C392.7 42.0 390.3 47.1 389.9 48.8M351.4 18.0C352.7 17.6 356.5 15.0 359.1 15.4C361.6 15.8 365.1 18.0 366.8 20.5C368.5 23.1 369.4 27.4 369.4 30.8C369.4 34.2 368.1 37.7 366.8 41.1C365.5 44.5 362.9 47.9 361.6 51.4C360.4 54.8 358.7 58.7 359.1 61.6C359.5 64.6 361.6 67.2 364.2 69.4C366.8 71.5 372.8 73.6 374.5 74.5M300.0 30.8C301.7 31.7 306.8 34.7 310.3 36.0C313.7 37.2 317.6 37.5 320.5 38.5C323.5 39.6 327.4 40.2 328.3 42.4C329.1 44.5 327.4 49.2 325.7 51.4C324.0 53.5 320.5 53.9 318.0 55.2C315.4 56.5 312.4 57.2 310.3 59.1C308.1 61.0 306.8 65.1 305.1 66.8C303.4 68.5 300.9 68.9 300.0 69.4M300.0 38.5C301.3 39.2 305.1 41.3 307.7 42.4C310.3 43.5 312.8 44.3 315.4 45.0C318.0 45.6 321.8 46.0 323.1 46.2M300.0 45.0C301.1 45.6 305.6 47.1 306.4 48.8C307.3 50.5 306.2 53.7 305.1 55.2C304.1 56.7 300.9 57.4 300.0 57.8M330.8 77.1C332.1 75.3 335.5 69.4 338.5 66.8C341.5 64.2 345.8 62.1 348.8 61.6C351.8 61.2 353.9 62.9 356.5 64.2C359.1 65.5 361.9 67.6 364.2 69.4C366.6 71.1 368.5 73.2 370.6 74.5C372.8 75.8 374.7 76.2 377.1 77.1C379.4 77.9 382.6 78.3 384.8 79.6C386.9 80.9 389.5 82.6 389.9 84.8C390.3 86.9 389.5 91.0 387.3 92.5C385.2 94.0 380.5 93.1 377.1 93.8C373.6 94.4 369.4 94.8 366.8 96.3C364.2 97.8 362.1 100.0 361.6 102.7C361.2 105.5 362.5 110.0 364.2 113.0C365.9 116.0 368.9 119.0 371.9 120.7C374.9 122.4 379.6 122.0 382.2 123.3C384.8 124.6 386.9 125.5 387.3 128.4C387.8 131.4 385.2 138.9 384.8 141.0M336.0 57.8C336.8 58.9 341.5 61.9 341.1 64.2C340.7 66.6 335.1 69.8 333.4 71.9C331.7 74.1 330.8 75.3 330.8 77.1C330.8 78.8 331.3 81.1 333.4 82.2C335.5 83.3 340.2 83.9 343.7 83.5C347.1 83.1 350.5 80.5 353.9 79.6C357.4 78.8 360.8 78.3 364.2 78.3C367.6 78.3 372.8 79.4 374.5 79.6M324.4 120.7C324.8 119.0 325.3 112.6 327.0 110.5C328.7 108.3 332.3 107.7 334.7 107.9C337.0 108.1 339.8 109.2 341.1 111.7C342.4 114.3 342.8 119.7 342.4 123.3C342.0 126.9 340.0 130.6 338.5 133.6C337.0 136.5 334.2 139.8 333.4 141.0M377.1 141.0C377.5 138.9 378.3 132.7 379.6 128.4C380.9 124.2 382.6 119.0 384.8 115.6C386.9 112.2 390.3 110.9 392.5 107.9C394.6 104.9 395.9 100.6 397.6 97.6C399.3 94.6 401.9 91.2 402.7 89.9M397.6 141.0C397.8 138.9 398.0 132.7 398.9 128.4C399.8 124.2 401.3 119.9 402.7 115.6C404.2 111.3 406.6 106.2 407.9 102.7C409.2 99.3 410.0 96.3 410.5 95.0M374.5 74.5C376.2 75.3 381.3 78.3 384.8 79.6C388.2 80.9 392.0 82.6 395.0 82.2C398.0 81.8 401.5 77.9 402.7 77.1M345.0 38.5C346.0 40.2 350.9 45.4 351.4 48.8C351.8 52.2 347.5 56.5 347.5 59.1C347.5 61.6 350.7 63.4 351.4 64.2M318.0 25.7C319.3 27.0 322.3 31.7 325.7 33.4C329.1 35.1 334.7 36.4 338.5 36.0C342.4 35.5 346.7 33.8 348.8 30.8C350.9 27.8 350.9 20.1 351.4 18.0M407.1 24.4a3.8 3.3 0 1 0 7.7 0a3.8 3.3 0 1 0 -7.7 0M2.6 141.0C2.8 143.1 2.6 150.0 3.9 153.8C5.1 157.7 7.9 162.0 10.3 164.1C12.6 166.3 15.8 166.7 18.0 166.7C20.1 166.7 21.8 166.0 23.1 164.1C24.4 162.2 24.0 157.7 25.7 155.1C27.4 152.6 30.0 150.4 33.4 148.7C36.8 147.0 42.0 145.3 46.2 144.9C50.5 144.4 55.4 145.5 59.1 146.1C62.7 146.8 65.7 148.7 68.1 148.7C70.4 148.7 72.4 146.6 73.2 146.1M11.6 179.5C12.0 177.8 14.6 175.3 16.7 174.4C18.8 173.5 21.6 173.0 24.4 173.9C27.2 174.7 31.0 178.2 33.4 179.5C35.7 180.9 38.7 180.6 38.5 182.1C38.3 183.6 34.7 187.7 32.1 188.5C29.5 189.4 26.1 187.9 23.1 187.2C20.1 186.6 16.1 186.0 14.1 184.7C12.2 183.4 11.1 181.2 11.6 179.5ZM131.0 174.4C130.6 173.1 130.1 169.3 128.4 166.7C126.7 164.1 123.3 160.7 120.7 159.0C118.2 157.3 116.0 156.8 113.0 156.4C110.0 156.1 106.2 156.5 102.7 156.9C99.3 157.4 95.9 157.8 92.5 159.0C89.0 160.2 85.2 162.2 82.2 164.1C79.2 166.0 76.8 168.2 74.5 170.5C72.1 172.9 69.4 175.2 68.1 178.2C66.7 181.2 66.1 184.9 66.3 188.5C66.5 192.2 68.4 196.4 69.4 200.1C70.3 203.7 70.9 206.9 71.9 210.4C73.0 213.8 74.5 218.4 75.8 220.6C77.1 222.9 78.6 224.1 79.6 223.7C80.6 223.3 81.7 220.7 81.7 218.1C81.7 215.4 79.5 210.8 79.6 207.8C79.7 204.8 80.5 201.8 82.2 200.1C83.9 198.4 87.8 199.0 89.9 197.5C92.0 196.0 93.3 193.2 95.0 191.1C96.8 188.9 97.6 186.2 100.2 184.7C102.7 183.2 106.6 182.6 110.5 182.1C114.3 181.6 119.9 182.0 123.3 181.6C126.7 181.2 128.9 180.7 131.0 179.5C133.1 178.3 134.9 173.8 136.1 174.4C137.4 175.0 137.4 181.2 138.7 183.4C140.0 185.5 142.0 186.4 143.8 187.2C145.7 188.1 149.0 188.3 150.0 188.5M123.3 148.7C124.6 148.1 128.4 146.1 131.0 144.9C133.6 143.6 137.4 141.6 138.7 141.0M128.4 168.0C129.7 167.5 133.1 165.6 136.1 165.4C139.1 165.2 144.1 166.0 146.4 166.7C148.7 167.3 149.4 168.8 150.0 169.3M150.0 179.5C149.0 179.1 146.2 178.0 143.8 177.0C141.5 175.9 137.4 173.8 136.1 173.1M0.0 236.0C1.7 235.4 6.8 233.7 10.3 232.2C13.7 230.7 17.1 228.8 20.5 227.1C24.0 225.3 27.0 222.9 30.8 221.9C34.7 220.9 39.8 220.5 43.7 221.1C47.5 221.8 51.2 223.7 53.9 225.8C56.7 227.8 59.7 231.1 60.4 233.5C61.0 235.8 59.7 239.0 57.8 239.9C55.9 240.8 52.0 239.3 48.8 238.6C45.6 238.0 41.5 236.0 38.5 236.0C35.5 236.0 32.6 236.9 30.8 238.6C29.0 240.3 28.0 243.7 27.7 246.3C27.5 248.9 27.7 252.1 29.5 254.0C31.3 255.9 35.3 256.8 38.5 257.9C41.7 258.9 45.8 258.9 48.8 260.4C51.8 261.9 54.8 263.3 56.5 266.9C58.2 270.5 58.7 279.5 59.1 282.0M0.0 264.3C1.3 264.1 4.7 262.6 7.7 263.0C10.7 263.4 14.6 265.4 18.0 266.9C21.4 268.4 26.3 270.1 28.3 272.0C30.2 273.9 30.0 276.8 29.5 278.4C29.1 280.1 26.3 281.4 25.7 282.0M150.0 223.2C149.0 224.5 145.1 227.5 143.8 230.9C142.6 234.3 141.5 241.2 142.6 243.7C143.6 246.3 148.8 245.9 150.0 246.3M150.0 260.4C148.1 261.1 142.7 262.4 138.7 264.3C134.7 266.2 129.7 269.1 125.9 272.0C122.0 275.0 117.3 280.4 115.6 282.0M150.0 200.1C149.6 200.9 147.7 203.5 147.7 205.2C147.7 206.9 149.6 209.5 150.0 210.4M57.5 194.9a4.1 3.5 0 1 0 8.3 0a4.1 3.5 0 1 0 -8.3 0M100.0 164.6a5.3 4.5 0 1 0 10.6 0a5.3 4.5 0 1 0 -10.6 0M83.8 183.4a3.5 3.0 0 1 0 7.1 0a3.5 3.0 0 1 0 -7.1 0M64.2 237.3a3.8 3.3 0 1 0 7.7 0a3.8 3.3 0 1 0 -7.7 0M35.7 246.3a4.1 3.5 0 1 0 8.3 0a4.1 3.5 0 1 0 -8.3 0M18.3 274.6a3.5 3.0 0 1 0 7.1 0a3.5 3.0 0 1 0 -7.1 0M135.2 279.7a3.5 3.0 0 1 0 7.1 0a3.5 3.0 0 1 0 -7.1 0M150.0 196.2C151.7 194.7 156.8 190.0 160.3 187.2C163.7 184.5 167.1 181.5 170.5 179.5C174.0 177.6 177.4 176.5 180.8 175.7C184.2 174.8 188.1 175.5 191.1 174.4C194.1 173.3 197.9 171.2 198.8 169.3C199.7 167.3 198.8 164.1 196.2 162.8C193.7 161.5 187.0 162.2 183.4 161.5C179.8 160.9 175.7 160.3 174.4 159.0C173.1 157.7 173.8 155.1 175.7 153.8C177.6 152.6 182.1 152.1 186.0 151.3C189.8 150.4 195.6 150.0 198.8 148.7C202.0 147.4 203.7 144.9 205.2 143.6C206.7 142.3 207.4 141.4 207.8 141.0M150.0 205.2C151.3 204.1 154.7 201.4 157.7 198.8C160.7 196.2 164.6 192.4 168.0 189.8C171.4 187.2 174.4 185.1 178.3 183.4C182.1 181.7 186.8 180.6 191.1 179.5C195.4 178.5 200.1 178.2 203.9 177.0C207.8 175.7 211.6 174.0 214.2 171.8C216.8 169.7 217.2 166.3 219.4 164.1C221.5 162.0 224.5 161.1 227.1 159.0C229.6 156.8 232.8 154.3 234.8 151.3C236.7 148.3 238.0 142.7 238.6 141.0M216.8 179.5C218.1 180.4 221.5 184.2 224.5 184.7C227.5 185.1 231.3 183.8 234.8 182.1C238.2 180.4 242.3 177.0 245.0 174.4C247.8 171.8 249.5 169.3 251.5 166.7C253.4 164.1 256.2 161.5 256.6 159.0C257.0 156.4 254.2 153.8 254.0 151.3C253.8 148.7 254.2 145.3 255.3 143.6C256.4 141.9 259.6 141.4 260.5 141.0M270.7 141.0C271.6 142.3 275.4 146.1 275.9 148.7C276.3 151.3 275.0 154.1 273.3 156.4C271.6 158.8 268.2 161.1 265.6 162.8C263.0 164.5 260.2 165.0 257.9 166.7C255.5 168.4 253.4 170.5 251.5 173.1C249.5 175.7 247.6 178.9 246.3 182.1C245.0 185.3 243.8 188.5 243.8 192.4C243.8 196.2 244.8 201.8 246.3 205.2C247.8 208.6 250.0 211.2 252.7 212.9C255.5 214.6 260.0 215.3 263.0 215.5C266.0 215.7 268.6 215.5 270.7 214.2C272.9 212.9 273.7 209.7 275.9 207.8C278.0 205.9 281.4 205.2 283.6 202.6C285.7 200.1 288.3 196.2 288.7 192.4C289.1 188.5 287.4 183.0 286.1 179.5C284.9 176.1 283.1 173.8 281.0 171.8C278.9 169.9 275.9 168.6 273.3 168.0C270.7 167.3 266.9 168.0 265.6 168.0M150.0 225.8C152.1 224.9 158.1 221.9 162.8 220.6C167.6 219.3 173.1 218.3 178.3 218.1C183.4 217.8 188.5 219.3 193.7 219.3C198.8 219.3 206.5 218.3 209.1 218.1M150.0 246.3C152.1 245.9 158.1 244.2 162.8 243.7C167.6 243.3 174.0 243.1 178.3 243.7C182.5 244.4 186.2 245.7 188.5 247.6C190.9 249.5 192.4 252.5 192.4 255.3C192.4 258.1 190.9 261.9 188.5 264.3C186.2 266.7 182.1 267.7 178.3 269.4C174.4 271.1 168.8 272.5 165.4 274.6C162.0 276.7 159.0 280.8 157.7 282.0M161.6 230.9C161.8 232.6 161.3 238.6 162.8 241.2C164.3 243.7 166.7 245.9 170.5 246.3C174.4 246.7 180.8 245.0 186.0 243.7C191.1 242.5 196.7 240.8 201.4 238.6C206.1 236.5 209.9 233.0 214.2 230.9C218.5 228.8 223.2 227.1 227.1 225.8C230.9 224.5 235.6 223.6 237.3 223.2M239.9 223.2C241.8 221.3 248.9 221.1 251.5 221.9C254.0 222.8 254.9 226.0 255.3 228.3C255.7 230.7 255.7 234.3 254.0 236.0C252.3 237.8 247.4 239.0 245.0 238.6C242.7 238.2 240.8 236.0 239.9 233.5C239.0 230.9 238.0 225.1 239.9 223.2ZM237.3 220.6C240.1 218.9 249.3 216.8 252.7 218.1C256.2 219.3 257.5 224.7 257.9 228.3C258.3 232.0 256.8 236.9 255.3 239.9C253.8 242.9 250.6 245.9 248.9 246.3C247.2 246.7 246.8 243.7 245.0 242.5C243.3 241.2 240.1 241.0 238.6 238.6C237.1 236.3 236.3 231.3 236.1 228.3C235.8 225.3 234.6 222.3 237.3 220.6ZM248.9 246.3C247.8 247.2 244.4 249.3 242.5 251.5C240.5 253.6 238.0 256.6 237.3 259.2C236.7 261.7 237.6 265.2 238.6 266.9C239.7 268.6 242.9 269.0 243.8 269.4M275.9 215.5C277.2 214.4 281.2 213.8 283.6 214.2C285.9 214.6 289.1 216.3 290.0 218.1C290.9 219.8 290.4 223.4 288.7 224.5C287.0 225.6 281.9 225.1 279.7 224.5C277.5 223.8 276.0 222.1 275.4 220.6C274.7 219.1 274.5 216.6 275.9 215.5ZM300.0 202.6C299.0 203.1 295.5 203.9 293.8 205.2C292.2 206.5 290.6 209.5 290.0 210.4M283.6 146.1C284.4 147.4 286.0 152.1 288.7 153.8C291.5 155.6 298.1 156.0 300.0 156.4M150.0 166.7C150.6 167.5 153.9 170.1 153.9 171.8C153.9 173.5 150.6 176.1 150.0 177.0M234.8 282.0C235.6 280.8 239.5 277.1 239.9 274.6C240.3 272.0 237.8 268.2 237.3 266.9M205.0 242.5a5.3 4.5 0 1 0 10.6 0a5.3 4.5 0 1 0 -10.6 0M210.2 192.4a5.3 4.5 0 1 0 10.6 0a5.3 4.5 0 1 0 -10.6 0M290.7 165.4a4.4 3.8 0 1 0 8.9 0a4.4 3.8 0 1 0 -8.9 0M151.0 157.7a4.1 3.5 0 1 0 8.3 0a4.1 3.5 0 1 0 -8.3 0M300.0 156.4C301.7 157.5 306.8 162.2 310.3 162.8C313.7 163.5 317.6 161.8 320.5 160.3C323.5 158.8 326.1 156.0 328.3 153.8C330.4 151.7 331.7 149.6 333.4 147.4C335.1 145.3 337.7 142.1 338.5 141.0M325.7 164.1C326.3 162.0 328.3 158.6 330.8 156.4C333.4 154.3 336.8 152.6 341.1 151.3C345.4 150.0 352.7 148.3 356.5 148.7C360.4 149.1 363.4 151.5 364.2 153.8C365.1 156.2 363.8 160.7 361.6 162.8C359.5 165.0 354.4 165.2 351.4 166.7C348.4 168.2 346.7 170.8 343.7 171.8C340.7 172.9 336.2 173.5 333.4 173.1C330.6 172.7 328.3 170.8 327.0 169.3C325.7 167.8 325.0 166.3 325.7 164.1ZM320.5 165.4C321.2 162.2 323.5 156.8 327.0 153.8C330.4 150.8 335.7 148.9 341.1 147.4C346.5 145.9 354.4 144.0 359.1 144.9C363.8 145.7 368.1 149.1 369.4 152.6C370.6 156.0 369.4 162.2 366.8 165.4C364.2 168.6 357.6 169.9 353.9 171.8C350.3 173.8 348.6 176.0 345.0 177.0C341.3 177.9 335.7 178.1 332.1 177.5C328.5 176.8 325.0 175.1 323.1 173.1C321.2 171.1 319.9 168.6 320.5 165.4ZM364.2 153.8C365.9 155.1 371.1 159.0 374.5 161.5C377.9 164.1 381.3 166.7 384.8 169.3C388.2 171.8 392.0 174.8 395.0 177.0C398.0 179.1 401.0 180.0 402.7 182.1C404.5 184.2 405.7 187.2 405.3 189.8C404.9 192.4 402.7 195.6 400.2 197.5C397.6 199.4 393.3 200.9 389.9 201.4C386.5 201.8 381.3 200.3 379.6 200.1M315.4 174.4C318.0 175.2 324.8 178.2 330.8 179.5C336.8 180.8 345.4 180.8 351.4 182.1C357.4 183.4 362.5 185.5 366.8 187.2C371.1 188.9 373.6 190.2 377.1 192.4C380.5 194.5 385.6 198.8 387.3 200.1M307.7 179.5C310.7 180.4 319.3 183.4 325.7 184.7C332.1 186.0 340.2 186.0 346.2 187.2C352.2 188.5 356.9 190.4 361.6 192.4C366.4 194.3 372.4 197.7 374.5 198.8M321.8 223.2C321.8 221.5 325.5 219.8 328.3 219.3C331.0 218.9 335.7 219.6 338.5 220.6C341.3 221.7 345.0 224.3 345.0 225.8C345.0 227.3 341.3 229.0 338.5 229.6C335.7 230.3 331.0 230.7 328.3 229.6C325.5 228.6 321.8 224.9 321.8 223.2ZM300.0 202.6C301.3 203.5 305.6 205.2 307.7 207.8C309.8 210.4 310.7 214.6 312.8 218.1C315.0 221.5 317.1 225.8 320.5 228.3C324.0 230.9 329.1 233.3 333.4 233.5C337.7 233.7 342.0 231.3 346.2 229.6C350.5 227.9 355.2 225.1 359.1 223.2C362.9 221.3 366.8 218.1 369.4 218.1C371.9 218.1 373.2 220.6 374.5 223.2C375.8 225.8 375.3 230.5 377.1 233.5C378.8 236.5 381.8 241.2 384.8 241.2C387.8 241.2 392.0 235.6 395.0 233.5C398.0 231.3 400.4 229.0 402.7 228.3C405.1 227.7 407.5 227.9 409.2 229.6C410.9 231.3 411.1 236.3 413.0 238.6C414.9 241.0 418.2 243.7 420.7 243.7C423.3 243.7 426.3 238.6 428.4 238.6C430.6 238.6 432.5 240.8 433.6 243.7C434.6 246.7 435.7 252.7 434.9 256.6C434.0 260.4 431.2 264.3 428.4 266.9C425.7 269.4 421.6 270.5 418.2 272.0C414.7 273.5 409.6 275.2 407.9 275.9M450.0 179.5C448.3 179.1 442.7 176.1 440.0 177.0C437.3 177.8 435.9 182.1 433.6 184.7C431.2 187.2 428.0 189.4 425.9 192.4C423.7 195.4 422.4 199.7 420.7 202.6C419.0 205.6 417.1 207.8 415.6 210.4C414.1 212.9 412.2 215.5 411.7 218.1C411.3 220.6 412.8 224.5 413.0 225.8M413.0 218.1C413.9 216.6 418.2 215.5 420.7 215.5C423.3 215.5 426.9 216.8 428.4 218.1C429.9 219.3 430.6 221.9 429.7 223.2C428.9 224.5 425.7 225.6 423.3 225.8C420.9 226.0 417.3 225.8 415.6 224.5C413.9 223.2 412.2 219.6 413.0 218.1ZM438.7 179.5C439.1 181.7 440.4 187.7 441.3 192.4C442.1 197.1 442.4 204.8 443.8 207.8C445.3 210.8 449.0 209.9 450.0 210.4M398.9 282.0C399.0 279.9 399.9 273.7 399.7 269.4C399.5 265.2 397.7 260.0 397.6 256.6C397.5 253.2 398.7 250.2 398.9 248.9M341.1 141.0C342.0 141.9 345.6 144.4 346.2 146.1C346.9 147.8 345.2 150.4 345.0 151.3M359.1 141.0C359.9 141.9 361.6 145.1 364.2 146.1C366.8 147.2 371.1 147.4 374.5 147.4C377.9 147.4 383.1 146.4 384.8 146.1M392.9 212.9a4.7 4.0 0 1 0 9.5 0a4.7 4.0 0 1 0 -9.5 0M396.1 277.9a5.3 4.5 0 1 0 10.6 0a5.3 4.5 0 1 0 -10.6 0M56.5 282.0C56.3 283.3 56.9 287.4 55.2 289.7C53.5 292.1 50.3 294.8 46.2 296.1C42.2 297.4 36.0 297.0 30.8 297.4C25.7 297.8 18.8 297.8 15.4 298.7C12.0 299.6 10.7 300.6 10.3 302.5C9.8 304.5 11.1 308.1 12.8 310.3C14.6 312.4 18.4 313.7 20.5 315.4C22.7 317.1 25.7 319.0 25.7 320.5C25.7 322.0 23.1 323.6 20.5 324.4C18.0 325.2 13.7 324.9 10.3 325.2C6.8 325.4 1.7 325.6 0.0 325.7M113.0 282.0C111.7 283.3 108.3 287.1 105.3 289.7C102.3 292.3 97.8 294.8 95.0 297.4C92.3 300.0 89.9 302.5 88.6 305.1C87.3 307.7 88.8 310.7 87.3 312.8C85.8 315.0 82.6 316.7 79.6 318.0C76.6 319.2 71.5 319.5 69.4 320.5C67.2 321.6 66.8 322.9 66.8 324.4C66.8 325.9 67.9 328.0 69.4 329.5C70.9 331.0 73.9 331.7 75.8 333.4C77.7 335.1 78.8 338.3 80.9 339.8C83.1 341.3 85.8 342.8 88.6 342.4C91.4 341.9 94.4 339.4 97.6 337.2C100.8 335.1 104.0 331.7 107.9 329.5C111.7 327.4 116.0 325.5 120.7 324.4C125.4 323.3 131.3 323.7 136.1 323.1C141.0 322.5 147.7 321.0 150.0 320.5M0.0 391.2C1.1 391.4 4.7 391.0 6.4 392.5C8.1 394.0 10.1 397.2 10.3 400.2C10.5 403.2 8.6 406.6 7.7 410.4C6.8 414.2 5.6 420.9 5.1 423.0M57.6 322.6a5.3 4.5 0 1 0 10.6 0a5.3 4.5 0 1 0 -10.6 0M101.7 300.5a4.1 3.5 0 1 0 8.3 0a4.1 3.5 0 1 0 -8.3 0M19.5 337.2a4.1 3.5 0 1 0 8.3 0a4.1 3.5 0 1 0 -8.3 0M101.5 397.1a5.9 5.0 0 1 0 11.8 0a5.9 5.0 0 1 0 -11.8 0M178.3 292.3C178.7 290.1 181.3 288.8 183.4 288.4C185.5 288.0 189.4 288.4 191.1 289.7C192.8 291.0 193.7 294.0 193.7 296.1C193.7 298.3 192.2 300.6 191.1 302.5C190.0 304.5 187.7 305.1 187.2 307.7C186.8 310.3 188.7 315.2 188.5 318.0C188.3 320.7 187.2 323.3 186.0 324.4C184.7 325.5 182.2 325.5 180.8 324.4C179.5 323.3 178.1 320.7 177.7 318.0C177.4 315.2 178.3 310.5 178.8 307.7C179.3 304.9 180.9 303.8 180.8 301.3C180.7 298.7 177.8 294.4 178.3 292.3ZM150.0 320.5C151.3 321.2 155.6 322.2 157.7 324.4C159.8 326.5 160.3 331.4 162.8 333.4C165.4 335.3 169.3 336.2 173.1 335.9C177.0 335.7 182.1 334.2 186.0 332.1C189.8 329.9 193.2 325.9 196.2 323.1C199.2 320.3 200.9 318.4 203.9 315.4C206.9 312.4 210.8 308.1 214.2 305.1C217.6 302.1 221.1 299.6 224.5 297.4C227.9 295.3 231.3 294.0 234.8 292.3C238.2 290.6 242.0 288.8 245.0 287.1C248.0 285.4 251.5 282.9 252.7 282.0M300.0 333.4C298.1 333.8 292.3 334.2 288.7 335.9C285.1 337.7 282.3 340.7 278.4 343.6C274.6 346.6 269.4 350.9 265.6 353.9C261.7 356.9 258.7 359.5 255.3 361.6C251.9 363.8 248.5 365.3 245.0 366.8C241.6 368.3 238.2 370.2 234.8 370.6C231.3 371.0 227.5 368.7 224.5 369.3C221.5 370.0 219.4 372.8 216.8 374.5C214.2 376.2 211.6 378.3 209.1 379.6C206.5 380.9 204.8 381.5 201.4 382.2C197.9 382.8 192.8 382.6 188.5 383.5C184.2 384.3 179.5 385.4 175.7 387.3C171.8 389.2 168.4 392.9 165.4 395.0C162.4 397.2 160.3 398.9 157.7 400.2C155.1 401.4 151.3 402.3 150.0 402.7M278.4 294.8C278.2 297.0 276.7 303.4 277.2 307.7C277.6 312.0 279.5 316.7 281.0 320.5C282.5 324.4 285.3 329.1 286.1 330.8M270.7 297.4C271.2 300.0 272.0 308.1 273.3 312.8C274.6 317.5 277.6 323.5 278.4 325.7M232.2 402.7C233.1 400.6 233.9 398.0 237.3 397.6C240.8 397.2 248.0 398.9 252.7 400.2C257.5 401.4 262.6 403.6 265.6 405.3C268.6 407.0 270.3 408.3 270.7 410.4C271.2 412.6 271.2 416.4 268.2 418.1C265.2 419.9 257.9 420.7 252.7 420.7C247.6 420.7 240.8 419.9 237.3 418.1C233.9 416.4 233.1 413.0 232.2 410.4C231.3 407.9 231.3 404.9 232.2 402.7ZM275.9 392.5C276.7 390.1 280.6 386.2 283.6 384.7C286.6 383.3 291.7 382.6 293.8 383.5C296.0 384.3 297.3 387.5 296.4 389.9C295.6 392.2 291.7 396.1 288.7 397.6C285.7 399.1 280.6 399.7 278.4 398.9C276.3 398.0 275.0 394.8 275.9 392.5ZM192.4 407.9C193.1 405.7 195.4 401.9 197.5 400.2C199.7 398.4 203.3 397.2 205.2 397.6C207.2 398.0 209.1 400.6 209.1 402.7C209.1 404.9 206.9 408.5 205.2 410.4C203.5 412.4 200.8 413.9 198.8 414.3C196.8 414.7 194.2 414.1 193.2 413.0C192.1 411.9 191.7 410.0 192.4 407.9ZM195.0 407.9C195.0 406.3 197.2 403.4 198.8 402.2C200.4 401.0 203.2 400.4 204.5 400.7C205.7 401.0 206.7 402.6 206.5 404.0C206.3 405.4 204.8 407.9 203.4 409.2C202.1 410.4 199.7 411.9 198.3 411.7C196.9 411.5 194.9 409.5 195.0 407.9ZM150.0 312.8C151.3 313.7 155.1 316.7 157.7 318.0C160.3 319.2 162.6 320.5 165.4 320.5C168.2 320.5 172.5 319.7 174.4 318.0C176.3 316.2 176.5 311.5 177.0 310.3M233.2 321.0a4.1 3.5 0 1 0 8.3 0a4.1 3.5 0 1 0 -8.3 0M283.4 309.0a5.3 4.5 0 1 0 10.6 0a5.3 4.5 0 1 0 -10.6 0M281.0 309.0a7.7 6.5 0 1 0 15.4 0a7.7 6.5 0 1 0 -15.4 0M234.6 404.8a5.3 4.5 0 1 0 10.6 0a5.3 4.5 0 1 0 -10.6 0M285.4 350.8a5.3 4.5 0 1 0 10.6 0a5.3 4.5 0 1 0 -10.6 0M282.5 350.8a8.3 7.0 0 1 0 16.5 0a8.3 7.0 0 1 0 -16.5 0M300.0 291.0C302.6 290.8 310.3 289.7 315.4 289.7C320.5 289.7 326.5 290.6 330.8 291.0C335.1 291.3 339.4 291.6 341.1 291.8M357.8 293.6C360.6 293.8 370.0 295.3 374.5 294.8C379.0 294.4 381.8 292.5 384.8 291.0C387.8 289.5 390.5 287.4 392.5 285.9C394.4 284.4 395.7 282.6 396.3 282.0M300.0 356.5C301.7 355.6 306.4 353.1 310.3 351.4C314.1 349.6 318.8 347.9 323.1 346.2C327.4 344.5 331.7 342.8 336.0 341.1C340.2 339.4 346.7 336.8 348.8 335.9M364.2 328.2C365.9 327.6 371.1 326.1 374.5 324.4C377.9 322.7 381.8 320.7 384.8 318.0C387.8 315.2 390.3 311.1 392.5 307.7C394.6 304.3 396.5 300.8 397.6 297.4C398.7 294.0 398.7 288.8 398.9 287.1M345.0 369.3C345.6 367.2 347.1 360.3 348.8 356.5C350.5 352.6 353.4 348.7 355.2 346.2C357.0 343.7 358.9 342.4 359.6 341.6M368.1 335.4C370.0 334.9 376.0 333.7 379.6 332.1C383.3 330.5 386.9 328.9 389.9 325.7C392.9 322.5 395.7 317.5 397.6 312.8C399.5 308.1 400.8 300.0 401.5 297.4M361.6 359.1L364.2 352.6M373.2 342.4C373.9 341.7 375.6 339.8 377.1 338.5C378.6 337.2 381.3 335.3 382.2 334.7M345.0 369.3C346.0 370.6 348.6 375.3 351.4 377.0C354.2 378.8 358.2 378.3 361.6 379.6C365.1 380.9 369.4 382.2 371.9 384.7C374.5 387.3 376.6 391.6 377.1 395.0C377.5 398.4 375.8 402.7 374.5 405.3C373.2 407.9 371.9 409.2 369.4 410.4C366.8 411.7 362.9 412.4 359.1 413.0C355.2 413.6 350.9 413.9 346.2 414.3C341.5 414.7 333.4 415.4 330.8 415.6M364.2 359.1C364.6 360.8 365.1 366.3 366.8 369.3C368.5 372.3 371.9 374.5 374.5 377.0C377.1 379.6 380.5 381.8 382.2 384.7C383.9 387.7 384.8 391.6 384.8 395.0C384.8 398.4 383.5 402.3 382.2 405.3C380.9 408.3 377.9 411.7 377.1 413.0M300.0 341.1C300.9 341.5 304.1 341.9 305.1 343.6C306.2 345.4 306.8 349.2 306.4 351.4C306.0 353.5 303.2 355.6 302.6 356.5M307.7 366.8C309.4 367.2 314.6 367.6 318.0 369.3C321.4 371.0 325.7 374.5 328.3 377.0C330.8 379.6 333.0 382.2 333.4 384.7C333.8 387.3 332.5 390.7 330.8 392.5C329.1 394.2 325.7 395.5 323.1 395.0C320.5 394.6 317.1 392.0 315.4 389.9C313.7 387.7 312.8 384.7 312.8 382.2C312.8 379.6 315.0 375.8 315.4 374.5M310.3 395.0C312.0 395.9 318.0 398.0 320.5 400.2C323.1 402.3 325.7 405.3 325.7 407.9C325.7 410.4 321.4 414.3 320.5 415.6M301.2 363.7a4.4 3.8 0 1 0 8.9 0a4.4 3.8 0 1 0 -8.9 0M260.0 24.0C261.5 24.4 265.8 26.1 268.7 26.2C271.7 26.3 275.3 24.3 277.5 24.5C279.7 24.7 281.5 25.9 281.8 27.3C282.2 28.7 281.1 31.3 279.7 32.8C278.2 34.2 275.3 35.3 273.1 36.0C270.9 36.8 268.4 36.4 266.6 37.1C264.7 37.9 263.3 39.3 262.2 40.4C261.1 41.5 260.4 43.2 260.0 43.7M281.8 27.3C283.3 27.1 287.7 25.9 290.6 26.2C293.5 26.6 296.6 28.4 299.3 29.5C302.1 30.6 304.4 31.7 307.0 32.8C309.5 33.9 311.9 35.3 314.6 36.0C317.4 36.8 321.9 37.0 323.4 37.1M288.4 32.8C289.1 33.9 290.6 37.7 292.8 39.3C295.0 41.0 299.1 42.4 301.5 42.6C303.9 42.8 305.3 40.2 307.0 40.4C308.6 40.6 309.7 42.6 311.3 43.7C313.0 44.8 314.6 45.9 316.8 47.0C319.0 48.1 323.0 49.2 324.5 50.3C325.9 51.3 326.8 52.6 325.5 53.5C324.3 54.4 319.2 55.5 316.8 55.7C314.4 55.9 312.3 54.8 311.3 54.6M276.4 51.3C276.9 52.6 278.0 57.0 279.7 59.0C281.3 61.0 283.7 62.3 286.2 63.4C288.8 64.5 292.0 65.5 295.0 65.5C297.9 65.5 301.1 64.5 303.7 63.4C306.2 62.3 308.4 60.3 310.3 59.0C312.1 57.7 313.9 56.3 314.6 55.7M275.3 54.6C275.7 56.4 276.0 62.6 277.5 65.5C278.9 68.5 281.1 70.8 284.0 72.1C286.9 73.4 291.1 73.2 295.0 73.2C298.8 73.2 305.0 72.3 307.0 72.1M260.0 54.6C260.9 55.3 263.8 56.8 265.5 59.0C267.1 61.2 268.9 64.5 269.8 67.7C270.7 71.0 271.3 75.4 270.9 78.7C270.6 81.9 269.1 85.2 267.6 87.4C266.2 89.6 263.5 89.9 262.2 91.8C260.9 93.6 260.4 97.2 260.0 98.3M307.0 72.1C307.9 70.6 310.6 65.9 312.4 63.4C314.3 60.8 315.7 58.3 317.9 56.8C320.1 55.3 323.2 54.4 325.5 54.6C327.9 54.8 330.1 56.4 332.1 57.9C334.1 59.4 336.5 61.0 337.6 63.4C338.7 65.7 339.2 69.6 338.7 72.1C338.1 74.6 335.4 76.8 334.3 78.7C333.2 80.5 331.7 81.9 332.1 83.0C332.5 84.1 334.3 85.2 336.5 85.2C338.7 85.2 342.3 84.1 345.2 83.0C348.1 81.9 351.0 79.9 353.9 78.7C356.9 77.4 359.4 76.1 362.7 75.4C366.0 74.6 370.9 74.3 373.6 74.3C376.3 74.3 378.2 75.2 379.1 75.4M335.4 56.8C336.3 55.7 339.4 52.4 340.8 50.3C342.3 48.1 343.0 43.3 344.1 43.7C345.2 44.1 346.3 50.3 347.4 52.4C348.5 54.6 349.2 56.8 350.7 56.8C352.1 56.8 354.7 54.6 356.1 52.4C357.6 50.3 358.5 47.0 359.4 43.7C360.3 40.4 361.0 35.9 361.6 32.8C362.1 29.7 363.6 26.8 362.7 25.1C361.8 23.5 358.1 23.5 356.1 22.9C354.1 22.4 351.6 22.0 350.7 21.8M260.0 91.8C261.1 92.5 264.0 95.2 266.6 96.1C269.1 97.0 272.7 97.6 275.3 97.2C277.8 96.9 280.6 93.4 281.8 93.9C283.1 94.5 283.3 98.0 282.9 100.5C282.6 103.1 281.3 107.1 279.7 109.2C278.0 111.4 275.3 112.5 273.1 113.6C270.9 114.7 268.7 115.6 266.6 115.8C264.4 116.0 261.1 114.9 260.0 114.7M281.8 93.9C283.3 92.9 287.7 89.2 290.6 87.4C293.5 85.6 296.6 85.6 299.3 83.0C302.1 80.5 305.7 73.9 307.0 72.1M323.4 119.9C324.5 118.2 327.7 111.4 329.9 109.2C332.1 107.1 334.3 106.7 336.5 107.1C338.7 107.4 341.2 109.3 343.0 111.4C344.8 113.6 346.7 118.5 347.4 119.9M356.1 119.9C356.9 118.2 359.4 112.5 360.5 109.2C361.6 106.0 362.7 102.7 362.7 100.5C362.7 98.3 360.1 95.8 360.5 96.1C360.9 96.5 362.7 100.9 364.9 102.7C367.1 104.5 370.7 106.0 373.6 107.1C376.5 108.1 379.6 109.6 382.4 109.2C385.1 108.9 388.7 105.6 390.0 104.9M364.9 32.8C365.6 33.9 368.9 36.4 369.2 39.3C369.6 42.2 367.1 47.0 367.1 50.3C367.1 53.5 367.8 56.4 369.2 59.0C370.7 61.5 373.6 63.4 375.8 65.5C378.0 67.7 381.3 71.0 382.4 72.1M381.3 0.0C380.7 1.1 380.0 4.4 378.0 6.6C376.0 8.7 372.2 11.3 369.2 13.1C366.3 14.9 363.4 16.2 360.5 17.5C357.6 18.8 353.4 20.0 351.8 20.8C350.1 21.5 350.9 21.7 350.7 21.8M260.0 6.6C261.1 7.6 264.0 12.7 266.6 13.1C269.1 13.5 272.4 10.2 275.3 8.7C278.2 7.3 281.1 5.5 284.0 4.4C286.9 3.3 290.2 2.9 292.8 2.2C295.3 1.5 298.2 0.4 299.3 0.0M281.8 120.0C282.0 121.5 282.0 125.8 282.9 128.7C283.9 131.7 285.7 134.6 287.3 137.5C288.9 140.4 290.0 143.7 292.8 146.2C295.5 148.8 300.1 151.3 303.7 152.8C307.3 154.2 311.0 155.0 314.6 155.0C318.3 155.0 322.3 153.9 325.5 152.8C328.8 151.7 332.1 150.2 334.3 148.4C336.5 146.6 337.2 144.4 338.7 141.8C340.1 139.3 341.6 135.7 343.0 133.1C344.5 130.6 346.3 128.7 347.4 126.6C348.5 124.4 349.2 121.1 349.6 120.0M312.4 158.2C313.2 159.9 315.0 165.0 316.8 168.1C318.6 171.2 320.8 174.8 323.4 176.8C325.9 178.8 329.2 179.7 332.1 180.1C335.0 180.4 338.3 179.9 340.8 179.0C343.4 178.1 344.8 176.1 347.4 174.6C349.9 173.2 353.6 172.1 356.1 170.3C358.7 168.4 360.5 166.2 362.7 163.7C364.9 161.1 367.8 157.9 369.2 155.0C370.7 152.0 371.8 148.8 371.4 146.2C371.1 143.7 369.2 140.6 367.1 139.7C364.9 138.8 361.2 140.0 358.3 140.8C355.4 141.5 351.9 142.8 349.6 144.0C347.2 145.3 345.0 147.7 344.1 148.4M260.0 163.7C261.8 164.1 267.3 165.7 270.9 165.9C274.6 166.1 278.6 164.1 281.8 164.8C285.1 165.5 286.9 168.6 290.6 170.3C294.2 171.9 300.4 172.8 303.7 174.6C307.0 176.4 307.3 179.4 310.3 181.2C313.2 183.0 317.2 184.6 321.2 185.5C325.2 186.5 329.9 186.8 334.3 186.6C338.7 186.5 343.4 185.4 347.4 184.5C351.4 183.5 356.5 181.7 358.3 181.2M288.4 157.1C290.0 155.7 295.9 157.3 299.3 158.2C302.8 159.1 307.3 160.8 309.2 162.6C311.0 164.4 311.2 167.3 310.3 169.2C309.3 171.0 306.2 173.0 303.7 173.5C301.1 174.1 297.3 173.5 295.0 172.4C292.6 171.3 290.6 169.5 289.5 167.0C288.4 164.4 286.8 158.6 288.4 157.1ZM276.4 216.1C277.7 214.3 282.0 213.0 286.2 212.9C290.4 212.7 298.4 213.6 301.5 215.0C304.6 216.5 305.0 219.6 304.8 221.6C304.6 223.6 303.5 226.1 300.4 227.1C297.3 228.0 289.9 227.6 286.2 227.1C282.6 226.5 280.2 225.6 278.6 223.8C276.9 222.0 275.1 218.0 276.4 216.1ZM321.2 222.7C321.2 220.9 323.0 218.9 325.5 218.3C328.1 217.8 332.8 218.7 336.5 219.4C340.1 220.1 344.5 221.2 347.4 222.7C350.3 224.1 353.9 226.9 353.9 228.1C353.9 229.4 350.3 230.2 347.4 230.3C344.5 230.5 340.1 229.4 336.5 229.2C332.8 229.1 328.1 230.3 325.5 229.2C323.0 228.1 321.2 224.5 321.2 222.7ZM316.8 207.4C316.4 208.9 314.3 212.5 314.6 216.1C315.0 219.8 316.8 226.0 319.0 229.2C321.2 232.5 324.8 234.0 327.7 235.8C330.6 237.6 335.0 239.3 336.5 239.9M390.0 192.1C388.4 192.5 382.9 193.2 380.2 194.3C377.4 195.4 375.4 196.5 373.6 198.7C371.8 200.8 369.6 204.5 369.2 207.4C368.9 210.3 370.0 213.6 371.4 216.1C372.9 218.7 376.2 220.5 378.0 222.7C379.8 224.9 381.6 226.4 382.4 229.2C383.1 232.1 382.4 238.2 382.4 239.9M260.0 133.1C261.1 134.0 264.4 137.5 266.6 138.6C268.7 139.7 270.9 138.8 273.1 139.7C275.3 140.6 278.4 141.8 279.7 144.0C280.9 146.2 281.8 150.6 280.8 152.8C279.7 155.0 275.8 156.6 273.1 157.1C270.4 157.7 266.6 155.9 264.4 156.0C262.2 156.2 260.7 157.9 260.0 158.2M260.0 141.8C261.5 142.6 266.6 144.8 268.7 146.2C270.9 147.7 273.5 149.3 273.1 150.6C272.7 151.9 268.7 153.5 266.6 153.9C264.4 154.2 261.1 153.0 260.0 152.8M373.6 120.0C373.8 121.5 374.0 125.8 374.7 128.7C375.4 131.7 376.7 135.3 378.0 137.5C379.3 139.7 380.3 140.9 382.4 141.8C384.4 142.8 388.7 142.8 390.0 142.9M390.0 124.4C389.1 125.1 385.8 126.9 384.5 128.7C383.3 130.6 382.7 134.2 382.4 135.3M247.4 269.4a4.1 6.2 0 1 0 8.2 0a4.1 6.2 0 1 0 -8.2 0M244.3 269.4a7.2 10.8 0 1 0 14.4 0a7.2 10.8 0 1 0 -14.4 0M253.0 160.3a1.8 2.1 0 1 0 3.6 0a1.8 2.1 0 1 0 -3.6 0M251.7 160.3a3.1 3.6 0 1 0 6.3 0a3.1 3.6 0 1 0 -6.3 0M334.7 163.6a3.9 3.9 0 1 0 7.7 0a3.9 3.9 0 1 0 -7.7 0M331.8 163.6a6.7 6.7 0 1 0 13.5 0a6.7 6.7 0 1 0 -13.5 0M348.3 157.2a3.9 3.3 0 1 0 7.7 0a3.9 3.3 0 1 0 -7.7 0M345.4 157.2a6.7 5.8 0 1 0 13.5 0a6.7 5.8 0 1 0 -13.5 0M270.5 368.6a4.6 3.6 0 1 0 9.2 0a4.6 3.6 0 1 0 -9.2 0M267.0 368.6a8.1 6.3 0 1 0 16.2 0a8.1 6.3 0 1 0 -16.2 0M185.4 296.9a2.6 3.1 0 1 0 5.1 0a2.6 3.1 0 1 0 -5.1 0M183.5 296.9a4.5 5.4 0 1 0 9.0 0a4.5 5.4 0 1 0 -9.0 0M181.1 315.4a1.8 5.7 0 1 0 3.6 0a1.8 5.7 0 1 0 -3.6 0M179.7 315.4a3.1 9.9 0 1 0 6.3 0a3.1 9.9 0 1 0 -6.3 0M197.8 408.4a2.3 2.3 0 1 0 4.6 0a2.3 2.3 0 1 0 -4.6 0M196.0 408.4a4.0 4.0 0 1 0 8.1 0a4.0 4.0 0 1 0 -8.1 0M296.9 414.3a2.6 3.6 0 1 0 5.1 0a2.6 3.6 0 1 0 -5.1 0M295.0 414.3a4.5 6.3 0 1 0 9.0 0a4.5 6.3 0 1 0 -9.0 0M300.3 411.7a3.6 5.1 0 1 0 7.2 0a3.6 5.1 0 1 0 -7.2 0M297.6 411.7a6.3 9.0 0 1 0 12.6 0a6.3 9.0 0 1 0 -12.6 0M295.6 221.6a2.6 2.8 0 1 0 5.2 0a2.6 2.8 0 1 0 -5.2 0M293.6 221.6a4.6 5.0 0 1 0 9.2 0a4.6 5.0 0 1 0 -9.2 0" fill="none" stroke="#3c5e4b" stroke-width="0.65"/>
<path d="M201.4 212.9C203.1 212.1 207.8 209.1 211.6 207.8C215.5 206.5 220.6 205.2 224.5 205.2C228.3 205.2 232.6 206.7 234.8 207.8C236.9 208.9 238.6 210.4 237.3 211.6C236.1 212.9 230.5 214.6 227.1 215.5C223.6 216.3 220.2 216.3 216.8 216.8C213.4 217.2 209.1 218.7 206.5 218.1C203.9 217.4 202.2 213.8 201.4 212.9M180.8 220.6C182.5 219.8 187.7 216.8 191.1 215.5C194.5 214.2 199.7 213.4 201.4 212.9M221.9 184.7C222.8 186.0 224.9 189.8 227.1 192.4C229.2 194.9 232.8 197.5 234.8 200.1C236.7 202.6 238.0 206.5 238.6 207.8M300.0 192.4C302.1 191.9 308.6 189.8 312.8 189.8C317.1 189.8 325.3 190.7 325.7 192.4C326.1 194.1 317.3 197.5 315.4 200.1C313.5 202.6 312.8 205.6 314.1 207.8C315.4 209.9 319.1 212.3 323.1 212.9C327.2 213.6 333.8 212.5 338.5 211.6C343.2 210.8 347.1 208.9 351.4 207.8C355.7 206.7 362.1 205.6 364.2 205.2M323.1 218.1C324.8 217.6 330.0 215.5 333.4 215.5C336.8 215.5 342.0 217.6 343.7 218.1M260.0 211.8C261.5 211.0 265.5 208.3 268.7 207.4C272.0 206.5 276.4 206.3 279.7 206.3C282.9 206.3 285.9 207.9 288.4 207.4C291.0 206.8 292.8 204.8 295.0 203.0C297.1 201.2 299.3 197.9 301.5 196.5C303.7 195.0 305.9 193.9 308.1 194.3C310.3 194.6 313.2 196.5 314.6 198.7C316.1 200.8 315.3 205.2 316.8 207.4C318.3 209.6 320.4 211.0 323.4 211.8C326.3 212.5 330.3 212.3 334.3 211.8C338.3 211.2 342.7 209.4 347.4 208.5C352.1 207.6 360.1 206.7 362.7 206.3" fill="none" stroke="#a988b8" stroke-width="0.6"/>
<path d="M330.8 30.8C331.5 31.7 334.7 34.2 334.7 36.0C334.7 37.7 330.8 39.4 330.8 41.1C330.8 42.8 334.5 44.5 334.7 46.2C334.9 47.9 331.9 49.4 332.1 51.4C332.3 53.3 335.3 56.7 336.0 57.8M323.4 37.1L328.2 37.6" fill="none" stroke="#222" stroke-width="0.8"/>
<g font-style="italic" font-size="6.7" fill="#2a2f2c" text-anchor="middle">
<text x="16.7" y="6.3">2964</text>
<text x="65.5" y="23.5">2711</text>
<text x="127.7" y="15.2">3516</text>
<text x="87.8" y="38.9">3564</text>
<text x="71.4" y="44.0">4396</text>
<text x="143.8" y="37.6">2226</text>
<text x="111.0" y="56.9">3901</text>
<text x="10.3" y="83.3">3282</text>
<text x="2.1" y="74.3">6</text>
<text x="87.3" y="80.0">3264</text>
<text x="120.7" y="93.1">4535</text>
<text x="36.5" y="103.6">2178</text>
<text x="101.0" y="108.5">3587</text>
<text x="118.9" y="112.9">3491</text>
<text x="45.7" y="127.5">3310</text>
<text x="89.9" y="127.0">5739</text>
<text x="45.7" y="137.0">2946</text>
<text x="68.8" y="134.4">2452</text>
<text x="113.0" y="134.4">3158</text>
<text x="167.5" y="15.2">4356</text>
<text x="191.1" y="35.8">3369</text>
<text x="247.6" y="25.0">2847</text>
<text x="231.4" y="40.9">5347</text>
<text x="263.0" y="5.5">2404</text>
<text x="283.6" y="22.9">4387</text>
<text x="292.0" y="31.9">2102</text>
<text x="270.7" y="46.6">1254</text>
<text x="237.8" y="67.9">2917</text>
<text x="291.3" y="73.8">2100</text>
<text x="177.0" y="69.7">3950</text>
<text x="246.3" y="82.5">5124</text>
<text x="273.3" y="96.2">3605</text>
<text x="205.2" y="103.4">3822</text>
<text x="167.5" y="106.9">5602</text>
<text x="283.6" y="109.0">1450</text>
<text x="174.4" y="127.5">3250</text>
<text x="236.1" y="126.2">2414</text>
<text x="263.0" y="126.2">1333</text>
<text x="384.3" y="10.6">3486</text>
<text x="370.6" y="38.9">1800</text>
<text x="316.7" y="48.6">2037</text>
<text x="315.4" y="73.8">4501</text>
<text x="384.3" y="64.8">10.2</text>
<text x="378.3" y="78.2">650</text>
<text x="395.0" y="76.4">37</text>
<text x="379.6" y="96.9">4649</text>
<text x="406.6" y="119.3">380</text>
<text x="332.1" y="128.3">5102</text>
<text x="356.5" y="128.3">5062</text>
<text x="304.6" y="130.1">4800</text>
<text x="411.0" y="26.8">15</text>
<text x="6.4" y="169.1">1534</text>
<text x="32.1" y="183.2">3710</text>
<text x="61.1" y="197.9">3139</text>
<text x="5.1" y="208.1">328</text>
<text x="105.3" y="167.0">3985</text>
<text x="122.0" y="154.2">5143</text>
<text x="145.1" y="174.2">2176</text>
<text x="87.3" y="185.8">4085</text>
<text x="104.0" y="191.7">4118</text>
<text x="100.7" y="219.9">4693</text>
<text x="68.1" y="239.7">3200</text>
<text x="40.6" y="248.7">3932</text>
<text x="45.0" y="268.5">5221</text>
<text x="102.2" y="268.5">4565</text>
<text x="21.8" y="278.0">2284</text>
<text x="219.4" y="148.0">2158</text>
<text x="270.2" y="153.2">240</text>
<text x="155.7" y="160.1">3824</text>
<text x="243.8" y="176.8">777</text>
<text x="219.4" y="184.5">1291</text>
<text x="263.0" y="192.2">3657</text>
<text x="215.5" y="196.1">1920</text>
<text x="275.1" y="199.9">4863</text>
<text x="216.3" y="204.3">2659</text>
<text x="247.6" y="236.4">650</text>
<text x="209.9" y="245.4">1808</text>
<text x="207.0" y="266.2">3904</text>
<text x="281.0" y="223.0">514</text>
<text x="252.2" y="269.3">86</text>
<text x="358.6" y="191.7">4610</text>
<text x="328.3" y="208.9">549</text>
<text x="371.9" y="208.9">3109</text>
<text x="397.1" y="216.6">2560</text>
<text x="421.5" y="223.5">2364</text>
<text x="332.9" y="226.9">662</text>
<text x="407.4" y="251.3">3917</text>
<text x="353.9" y="279.5">4265</text>
<text x="401.5" y="280.8">404</text>
<text x="338.5" y="166.5">20</text>
<text x="352.1" y="160.1">120</text>
<text x="61.6" y="296.0">4252</text>
<text x="105.8" y="303.2">2326</text>
<text x="63.7" y="325.5">2194</text>
<text x="23.6" y="340.1">3686</text>
<text x="97.6" y="355.0">4588</text>
<text x="3.9" y="389.7">371</text>
<text x="107.9" y="400.0">2725</text>
<text x="97.6" y="420.5">4667</text>
<text x="241.2" y="308.0">4160</text>
<text x="237.3" y="323.7">3901</text>
<text x="291.3" y="296.0">4338</text>
<text x="288.7" y="311.4">507</text>
<text x="293.8" y="331.4">3720</text>
<text x="290.8" y="353.2">228</text>
<text x="227.8" y="359.7">4226</text>
<text x="275.1" y="371.0">86</text>
<text x="150.0" y="368.7">4389</text>
<text x="215.0" y="396.9">3340</text>
<text x="263.0" y="395.4">2760</text>
<text x="290.8" y="388.9">225</text>
<text x="283.6" y="400.0">327</text>
<text x="240.4" y="407.7">915</text>
<text x="150.0" y="409.5">3640</text>
<text x="407.9" y="297.8">229</text>
<text x="416.1" y="302.4">93</text>
<text x="378.3" y="326.8">2668</text>
<text x="399.7" y="333.2">35</text>
<text x="380.1" y="344.8">11</text>
<text x="372.4" y="368.7">550</text>
<text x="304.1" y="366.1">1452</text>
<text x="387.3" y="391.8">49</text>
<text x="364.2" y="414.1">1531</text>
<text x="380.1" y="418.0">256</text>
<text x="303.1" y="418.0">157</text>
<text x="302.1" y="346.0">413</text>
<text x="152.7" y="267.7">3760</text>
<text x="138.6" y="285.2">2095</text>
<text x="298.2" y="54.8">5536</text>
<text x="299.3" y="168.3">1964</text>
<text x="290.6" y="156.9">3069</text>
</g><g font-style="italic" font-size="4.6" fill="#2a2f2c" text-anchor="middle">
<text x="215.5" y="83.8" transform="rotate(0 215.5 82.2)">5000</text>
<text x="217.3" y="133.9" transform="rotate(-40 217.3 132.3)">4000</text>
<text x="225.0" y="135.2" transform="rotate(-40 225.0 133.6)">5000</text>
<text x="79.6" y="170.3" transform="rotate(-40 79.6 168.7)">4000</text>
<text x="235.3" y="146.5" transform="rotate(-85 235.3 144.9)">2000</text>
<text x="350.1" y="293.9" transform="rotate(3 350.1 292.3)">4000</text>
<text x="357.0" y="333.7" transform="rotate(-28 357.0 332.1)">3000</text>
<text x="364.2" y="340.6" transform="rotate(-40 364.2 339.0)">2000</text>
<text x="369.9" y="349.9" transform="rotate(-60 369.9 348.3)">1000</text>
<text x="382.7" y="365.3" transform="rotate(-88 382.7 363.7)">200</text>
</g>
<text x="185.5" y="8.8" font-size="7.8" font-weight="normal" font-style="italic" text-anchor="start" fill="#3a3a3a" letter-spacing="2.3">PLAIN</text>
<text x="322.5" y="-5.0" font-size="7.8" font-weight="normal" font-style="italic" text-anchor="start" fill="#333" transform="rotate(76 322.5 -5.0)" letter-spacing="0.7">RRENT</text>
<text x="439.8" y="63.0" font-size="11.2" font-weight="normal" font-style="normal" text-anchor="start" fill="#2a2a2a" transform="rotate(-90 439.8 63.0)" letter-spacing="2.2">PORTUG</text>
<text x="417.0" y="72.3" font-size="6.6" font-weight="normal" font-style="normal" text-anchor="start" fill="#262626" letter-spacing="0.5">LISBOA</text>
<text x="374.5" y="153.0" font-size="6.8" font-weight="normal" font-style="normal" text-anchor="start" fill="#262626">São Vincente</text>
<text x="399.0" y="145.0" font-size="6.8" font-weight="normal" font-style="normal" text-anchor="start" fill="#262626">Cabo</text>
<text x="307.0" y="161.5" font-size="7.2" font-weight="normal" font-style="italic" text-anchor="start" fill="#444" transform="rotate(-30 307.0 161.5)" letter-spacing="0.35">Gorringe Ridge</text>
<text x="359.5" y="160.5" font-size="6.9" font-weight="bold" font-style="italic" text-anchor="start" fill="#262626" transform="rotate(29 359.5 160.5)">Ormonde SMt.</text>
<text x="344.0" y="169.5" font-size="6.9" font-weight="bold" font-style="italic" text-anchor="start" fill="#262626" transform="rotate(29.7 344.0 169.5)">Gettysburg SMt.</text>
<text x="296.0" y="212.0" font-size="6.9" font-weight="bold" font-style="italic" text-anchor="start" fill="#262626" transform="rotate(-26.6 296.0 212.0)">Ampère SMt.</text>
<text x="335.0" y="233.0" font-size="6.6" font-weight="bold" font-style="italic" text-anchor="start" fill="#262626" transform="rotate(21 335.0 233.0)">Coral Patch Bank</text>
<text x="195.5" y="164.0" font-size="6.5" font-weight="normal" font-style="italic" text-anchor="start" fill="#262626"><tspan font-weight="bold">Josephine Bank</tspan> 150</text>
<text x="169.5" y="215.0" font-size="6.5" font-weight="normal" font-style="italic" text-anchor="start" fill="#262626"><tspan font-weight="bold">Lion Bank</tspan> 434</text>
<text x="130.0" y="229.0" font-size="6.5" font-weight="normal" font-style="italic" text-anchor="start" fill="#262626"><tspan font-weight="bold">Dragon Bank</tspan> 1240</text>
<text x="211.5" y="228.0" font-size="6.5" font-weight="bold" font-style="italic" text-anchor="start" fill="#262626">Unicorn</text>
<text x="219.0" y="235.0" font-size="6.5" font-weight="bold" font-style="italic" text-anchor="start" fill="#262626">Bank</text>
<text x="263.0" y="275.5" font-size="6.6" font-weight="bold" font-style="italic" text-anchor="start" fill="#262626">Seine SMt.</text>
<text x="115.0" y="291.5" font-size="6.3" font-weight="bold" font-style="normal" text-anchor="start" fill="#262626" letter-spacing="0.25">ARQUIPELAGO</text>
<text x="115.0" y="300.5" font-size="6.3" font-weight="bold" font-style="normal" text-anchor="start" fill="#262626" letter-spacing="0.25">DA MADEIRA</text>
<text x="123.5" y="316.0" font-size="6.4" font-weight="bold" font-style="normal" text-anchor="start" fill="#262626">Madeira</text>
<text x="195.0" y="296.0" font-size="6.6" font-weight="bold" font-style="normal" text-anchor="start" fill="#262626">Porto Santo</text>
<text x="151.0" y="333.0" font-size="5" font-weight="normal" font-style="italic" text-anchor="start" fill="#555" transform="rotate(-32 151.0 333.0)">Funchal</text>
<text x="250.0" y="366.0" font-size="6.6" font-weight="bold" font-style="italic" text-anchor="start" fill="#262626">Dacia</text>
<text x="251.0" y="374.0" font-size="6.6" font-weight="bold" font-style="italic" text-anchor="start" fill="#262626">SMt.</text>
<text x="212.0" y="411.5" font-size="6.6" font-weight="bold" font-style="normal" text-anchor="start" fill="#262626">Ilhas</text>
<text x="212.0" y="419.5" font-size="6.6" font-weight="bold" font-style="normal" text-anchor="start" fill="#262626">Selvagens</text>
<text x="313.0" y="410.5" font-size="6.6" font-weight="bold" font-style="italic" text-anchor="start" fill="#262626">Conception</text>
<text x="313.0" y="418.0" font-size="6.6" font-weight="bold" font-style="italic" text-anchor="start" fill="#262626">Bank</text>
<text x="421.0" y="315.5" font-size="6" font-weight="normal" font-style="normal" text-anchor="start" fill="#262626">Ras Cantin</text>
<text x="415.0" y="321.5" font-size="5.6" font-weight="normal" font-style="normal" text-anchor="start" fill="#262626">(Cap Beddouza)</text>
<text x="418.0" y="328.5" font-size="6" font-weight="normal" font-style="normal" text-anchor="start" fill="#262626">Safi</text>
<text x="403.0" y="359.0" font-size="6" font-weight="normal" font-style="normal" text-anchor="start" fill="#262626">Essaouira</text>
<text x="399.0" y="390.0" font-size="6" font-weight="normal" font-style="normal" text-anchor="start" fill="#262626">Cap Ghir</text>
<text x="406.0" y="399.0" font-size="6" font-weight="normal" font-style="normal" text-anchor="start" fill="#262626">Agadir</text>
<text x="441.0" y="295.0" font-size="6" font-weight="normal" font-style="normal" text-anchor="start" fill="#262626">El J</text>
<text x="376.0" y="90.0" font-size="5.4" font-weight="normal" font-style="italic" text-anchor="start" fill="#444">C. da</text>
<text x="386.0" y="84.0" font-size="4.6" font-weight="normal" font-style="italic" text-anchor="start" fill="#444" transform="rotate(-25 386.0 84.0)">Roca</text>
<path d="M312.4 0.0C310.3 20.0 303.0 88.7 300.0 120.0C297.0 151.3 295.6 163.3 294.2 188.0C292.8 212.7 291.5 244.7 291.5 268.0C291.5 291.3 292.8 302.3 294.0 328.0C295.2 353.7 298.2 406.3 299.0 422.0" fill="none" stroke="#e268ea" stroke-width="0.75"/>
<text x="304.6" y="405.5" font-size="8.2" font-weight="bold" fill="#e040e0" transform="rotate(-88 304.6 405.5)">4°W (7'E)</text>
<path d="M449.5 0V422" stroke="#c060c8" stroke-width="1" stroke-dasharray="1.5 7"/>
<path d="M403 11.5H445.5M403 7.5V11.5M445.5 7.5V11.5" stroke="#111" stroke-width="1.3" fill="none"/><path d="M403 9.5H445" stroke="#111" stroke-width="1.5" stroke-dasharray="1 2.5"/>
<text x="421" y="21" font-size="8" fill="#333">60NM</text>
<path d="M238.2 15.3L219 10.2" stroke="#0a0a0a" stroke-width="3.2"/><path d="M212.6 8.6L223.2 4.6L220.6 15.6Z" fill="#0a0a0a"/>
<path d="M0 -5.2C3.2 -3.6 2.8 2 0 5.2C-2.8 2 -3.2 -3.6 0 -5.2Z" fill="#d428e2" transform="translate(402.7 68.8) rotate(-25)"/>
<path d="M0 -5.2C3.2 -3.6 2.8 2 0 5.2C-2.8 2 -3.2 -3.6 0 -5.2Z" fill="#d428e2" transform="translate(418.2 137.4) rotate(-35)"/>
<path d="M0 -5.2C3.2 -3.6 2.8 2 0 5.2C-2.8 2 -3.2 -3.6 0 -5.2Z" fill="#d428e2" transform="translate(197.0 303.1) rotate(-70)"/>
<path d="M0 -5.2C3.2 -3.6 2.8 2 0 5.2C-2.8 2 -3.2 -3.6 0 -5.2Z" fill="#d428e2" transform="translate(211.1 402.2) rotate(-110)"/>
<path d="M0 -5.2C3.2 -3.6 2.8 2 0 5.2C-2.8 2 -3.2 -3.6 0 -5.2Z" fill="#d428e2" transform="translate(407.9 312.3) rotate(-35)"/>
<path d="M0 -5.2C3.2 -3.6 2.8 2 0 5.2C-2.8 2 -3.2 -3.6 0 -5.2Z" fill="#d428e2" transform="translate(388.6 383.0) rotate(-25)"/>
<circle cx="148.6" cy="308" r="1.7" fill="#d828e0"/>
<path d="M413 173.3L165.7 300.3" stroke="#111" stroke-width="1" stroke-dasharray="1.2 1.6"/>
<path d="M414.5 175.5L426 167.5L441.5 161L443 168.2L435 172.6L421 175.6Z" fill="#9aa0b8" transform="translate(1.2 1.2)"/>
<path d="M413 173.6L425.8 165.8L440.2 159.6L442 166.9L433.6 171.6L420.7 174.4Z" fill="#4166d6"/>
<g transform="translate(164.3 290)"><circle cx="0" cy="-8.2" r="2.4" fill="none" stroke="#2a4662" stroke-width="1.7"/><path d="M0 -6V9.5" stroke="#2a4662" stroke-width="2.8"/><path d="M-3.2 -4.2H3.2" stroke="#2a4662" stroke-width="1.5"/><path d="M-8.6 2.2C-7.4 6.8 -3.6 8.4 0 8.4C3.6 8.4 7.4 6.2 8.6 1.2" stroke="#2a4662" stroke-width="3.6" fill="none"/><path d="M-11.4 3.4L-9.6 -2.6L-5.2 1.8ZM11.2 2.4L10 -3.6L5.2 0.6Z" fill="#2a4662"/><path d="M0.2 -8.4C3.8 -8.6 4.6 -5.4 2.6 -3.6C0.4 -1.6 -2.6 -1 -3.4 0.6C-3.8 1.6 -3 2.6 -2.4 3.2" stroke="#eaa21c" stroke-width="1.3" fill="none" stroke-linecap="round"/></g>
<rect x="150.7" y="302.2" width="28" height="11.1" fill="#ffff00"/><text x="152" y="311" font-size="8.6" fill="#1e1e00" textLength="24.2" lengthAdjust="spacingAndGlyphs">WP28</text>
<path d="M0.5 0V422" stroke="#555" stroke-width="1"/>
</svg></div>
<!-- POLAR -->
<div id="polar" class="abs" style="left:479px;top:112px;width:434px;height:423px;background:#fff;overflow:hidden"><svg class="abs" style="left:0;top:0" width="434" height="423" viewBox="0 0 434 423">
<circle cx="217.2" cy="239.0" r="17.44" fill="none" stroke="#c4c4c4" stroke-width="0.8"/>
<circle cx="217.2" cy="239.0" r="34.88" fill="none" stroke="#c4c4c4" stroke-width="0.8"/>
<circle cx="217.2" cy="239.0" r="52.32" fill="none" stroke="#c4c4c4" stroke-width="0.8"/>
<circle cx="217.2" cy="239.0" r="69.76" fill="none" stroke="#c4c4c4" stroke-width="0.8"/>
<circle cx="217.2" cy="239.0" r="87.20" fill="none" stroke="#8a8a8a" stroke-width="0.8"/>
<circle cx="217.2" cy="239.0" r="104.64" fill="none" stroke="#c4c4c4" stroke-width="0.8"/>
<circle cx="217.2" cy="239.0" r="122.08" fill="none" stroke="#c4c4c4" stroke-width="0.8"/>
<circle cx="217.2" cy="239.0" r="139.52" fill="none" stroke="#c4c4c4" stroke-width="0.8"/>
<circle cx="217.2" cy="239.0" r="156.96" fill="none" stroke="#c4c4c4" stroke-width="0.8"/>
<circle cx="217.2" cy="239.0" r="174.40" fill="none" stroke="#8a8a8a" stroke-width="0.8"/>
<circle cx="217.2" cy="239.0" r="191.84" fill="none" stroke="#c4c4c4" stroke-width="0.8"/>
<circle cx="217.2" cy="239.0" r="209.28" fill="none" stroke="#c4c4c4" stroke-width="0.8"/>
<circle cx="217.2" cy="239.0" r="226.72" fill="none" stroke="#c4c4c4" stroke-width="0.8"/>
<path d="M217.2 239.0L344.0 51.0M217.2 239.0L90.4 51.0M217.2 239.0L347.2 53.3M217.2 239.0L87.2 53.3M217.2 239.0L350.5 55.6M217.2 239.0L83.9 55.6M217.2 239.0L356.8 60.3M217.2 239.0L77.6 60.3M217.2 239.0L395.9 99.4M217.2 239.0L38.5 99.4M217.2 239.0L413.5 125.6M217.2 239.0L20.9 125.6M217.2 239.0L430.2 161.5M217.2 239.0L4.2 161.5M217.2 239.0L436.2 180.3M217.2 239.0L-1.8 180.3M217.2 239.0L440.5 199.6M217.2 239.0L-6.1 199.6M217.2 239.0L443.9 239.0M217.2 239.0L-9.5 239.0M217.2 239.0L430.2 316.5M217.2 239.0L4.2 316.5M217.2 239.0L413.5 352.4M217.2 239.0L20.9 352.4M217.2 239.0L377.5 399.3M217.2 239.0L56.9 399.3M217.2 239.0L362.9 412.7M217.2 239.0L71.5 412.7M217.2 239.0L353.6 420.1M217.2 239.0L80.8 420.1M217.2 239.0L330.6 435.3M217.2 239.0L103.8 435.3M217.2 239.0L318.0 442.1M217.2 239.0L116.4 442.1M217.2 239.0L294.7 452.0M217.2 239.0L139.7 452.0M217.2 239.0L288.4 454.3M217.2 239.0L146.0 454.3M217.2 239.0L270.9 459.3M217.2 239.0L163.5 459.3M217.2 239.0L266.7 460.3M217.2 239.0L167.7 460.3M217.2 239.0L245.6 463.9M217.2 239.0L188.8 463.9M217.2 239.0L237.0 464.9M217.2 239.0L197.4 464.9M217.2 239.0L217.2 465.7" stroke="#cdcdcd" stroke-width="0.75" fill="none"/>
<rect x="212.9" y="200.1" width="9.2" height="8" fill="#fff"/>
<text x="217.5" y="207.1" font-size="8.5" fill="#8c8c8c" text-anchor="middle">2</text>
<rect x="212.9" y="182.7" width="9.2" height="8" fill="#fff"/>
<text x="217.5" y="189.7" font-size="8.5" fill="#8c8c8c" text-anchor="middle">3</text>
<rect x="212.9" y="165.2" width="9.2" height="8" fill="#fff"/>
<text x="217.5" y="172.2" font-size="8.5" fill="#8c8c8c" text-anchor="middle">4</text>
<rect x="212.9" y="147.8" width="9.2" height="8" fill="#fff"/>
<text x="217.5" y="154.8" font-size="8.5" fill="#8c8c8c" text-anchor="middle">5</text>
<rect x="212.9" y="130.4" width="9.2" height="8" fill="#fff"/>
<text x="217.5" y="137.4" font-size="8.5" fill="#8c8c8c" text-anchor="middle">6</text>
<rect x="212.9" y="112.9" width="9.2" height="8" fill="#fff"/>
<text x="217.5" y="119.9" font-size="8.5" fill="#8c8c8c" text-anchor="middle">7</text>
<rect x="212.9" y="95.5" width="9.2" height="8" fill="#fff"/>
<text x="217.5" y="102.5" font-size="8.5" fill="#8c8c8c" text-anchor="middle">8</text>
<rect x="212.9" y="78.0" width="9.2" height="8" fill="#fff"/>
<text x="217.5" y="85.0" font-size="8.5" fill="#8c8c8c" text-anchor="middle">9</text>
<rect x="210.5" y="60.6" width="14" height="8" fill="#fff"/>
<text x="217.5" y="67.6" font-size="8.5" fill="#8c8c8c" text-anchor="middle">10</text>
<rect x="210.5" y="43.2" width="14" height="8" fill="#fff"/>
<text x="217.5" y="50.2" font-size="8.5" fill="#8c8c8c" text-anchor="middle">11</text>
<rect x="210.5" y="25.7" width="14" height="8" fill="#fff"/>
<text x="217.5" y="32.7" font-size="8.5" fill="#8c8c8c" text-anchor="middle">12</text>
<rect x="348.7" y="41.5" width="13" height="8.4" fill="#fff"/>
<text x="355.2" y="48.5" font-size="8.5" fill="#a0a0a0" text-anchor="middle">34°</text>
<rect x="72.7" y="41.5" width="13" height="8.4" fill="#fff"/>
<text x="79.2" y="48.5" font-size="8.5" fill="#a0a0a0" text-anchor="middle">34°</text>
<rect x="352.1" y="43.9" width="13" height="8.4" fill="#fff"/>
<text x="358.6" y="50.9" font-size="8.5" fill="#a0a0a0" text-anchor="middle">35°</text>
<rect x="69.3" y="43.9" width="13" height="8.4" fill="#fff"/>
<text x="75.8" y="50.9" font-size="8.5" fill="#a0a0a0" text-anchor="middle">35°</text>
<rect x="355.8" y="46.6" width="13" height="8.4" fill="#fff"/>
<text x="362.3" y="53.6" font-size="8.5" fill="#a0a0a0" text-anchor="middle">36°</text>
<rect x="65.6" y="46.6" width="13" height="8.4" fill="#fff"/>
<text x="72.1" y="53.6" font-size="8.5" fill="#a0a0a0" text-anchor="middle">36°</text>
<rect x="361.7" y="51.3" width="13" height="8.4" fill="#fff"/>
<text x="368.2" y="58.3" font-size="8.5" fill="#a0a0a0" text-anchor="middle">38°</text>
<rect x="59.7" y="51.3" width="13" height="8.4" fill="#fff"/>
<text x="66.2" y="58.3" font-size="8.5" fill="#a0a0a0" text-anchor="middle">38°</text>
<text x="405.5" y="94.9" font-size="8.5" fill="#a0a0a0" text-anchor="middle">52°</text>
<text x="28.9" y="94.9" font-size="8.5" fill="#a0a0a0" text-anchor="middle">52°</text>
<text x="424.2" y="122.5" font-size="8.5" fill="#a0a0a0" text-anchor="middle">60°</text>
<text x="10.2" y="122.5" font-size="8.5" fill="#a0a0a0" text-anchor="middle">60°</text>
<text x="424.2" y="361.5" font-size="8.5" fill="#a0a0a0" text-anchor="middle">120°</text>
<text x="10.2" y="361.5" font-size="8.5" fill="#a0a0a0" text-anchor="middle">120°</text>
<text x="385.5" y="406.2" font-size="8.5" fill="#a0a0a0" text-anchor="middle">135°</text>
<text x="373.3" y="419.4" font-size="8.5" fill="#a0a0a0" text-anchor="middle">140°</text>
<text x="362.5" y="427.0" font-size="8.5" fill="#a0a0a0" text-anchor="middle">143°</text>
<rect x="187.2" y="3" width="60" height="11" fill="#fff"/>
<text x="218.2" y="11.5" font-size="8.9" fill="#2a2a2a" text-anchor="middle">Vent 16.0nds</text>
<path d="M217.2 239.0L217.4 226.0L218.1 218.0L219.9 207.4L226.3 189.5L236.5 171.7L249.2 157.7L262.0 146.7L277.3 136.0L291.8 127.6L302.7 130.4L318.0 137.3L333.3 146.2L348.6 159.0L361.4 171.7L369.5 183.2L372.0 190.8L374.1 197.2L384.3 212.5L393.5 229.0L398.5 248.0L399.8 271.0L397.0 303.0L394.2 340.5L378.9 358.4L361.0 372.6L343.1 382.3L322.8 390.5L304.7 394.5L281.3 399.1L257.2 401.7L242.3 399.6L225.8 394.9L217.0 384.2L208.6 394.9L192.1 399.6L177.2 401.7L153.1 399.1L129.7 394.5L111.6 390.5L91.3 382.3L73.4 372.6L55.5 358.4L40.2 340.5L37.4 303.0L34.6 271.0L35.9 248.0L40.9 229.0L50.1 212.5L60.3 197.2L62.4 190.8L64.9 183.2L73.0 171.7L85.8 159.0L101.1 146.2L116.4 137.3L131.7 130.4L142.6 127.6L157.1 136.0L172.4 146.7L185.2 157.7L197.9 171.7L208.1 189.5L214.5 207.4L216.3 218.0L217.0 226.0L217.2 239.0Z" fill="none" stroke="#0a0a0a" stroke-width="2" stroke-linejoin="round"/>
<circle cx="291.8" cy="127.9" r="2.6" fill="#fff" stroke="#0a0a0a" stroke-width="1.3"/>
<circle cx="142.6" cy="127.9" r="2.6" fill="#fff" stroke="#0a0a0a" stroke-width="1.3"/>
<circle cx="257.2" cy="401.6" r="2.6" fill="#fff" stroke="#0a0a0a" stroke-width="1.3"/>
<circle cx="177.2" cy="401.6" r="2.6" fill="#fff" stroke="#0a0a0a" stroke-width="1.3"/>
<path d="M217.2 239.0L322.8 390.4" stroke="#2030ff" stroke-width="0.8"/>
<path d="M216.3 238.4L218.1 239.6L300.0 357.0Z" fill="#1020ff" stroke="#1020ff" stroke-width="0.5"/>
<path d="M315.0 379.5L309.1 376.3L303.6 371.6L299.5 366.0L297.0 359.7L299.5 357.4L302.6 355.8L307.7 360.2L311.6 366.0L314.0 372.8Z" fill="#1010ee"/>
<circle cx="322.8" cy="390.4" r="3" fill="#1010ee"/>
<rect x="325" y="392" width="99" height="12.5" fill="#ffff00"/>
<text x="327.5" y="401.6" font-size="9" fill="#222">10.6nds à 145° du vent</text>
<rect x="2.5" y="400.5" width="131" height="21" fill="#fff"/>
<text x="2.8000000000000114" y="408.5" font-size="8.8" fill="#3a3a3a">Vmg Up : 6.4 (7.7nds à 034°)</text>
<text x="2.8000000000000114" y="419" font-size="8.8" fill="#3a3a3a">Vmg Down : -9.3 (9.6nds à 166°)</text>
<rect x="0.75" y="0.75" width="432.5" height="421.5" fill="none" stroke="#e80000" stroke-width="1.5"/>
</svg></div>
<!-- RIGHT -->
<div id="right" class="abs" style="left:918px;top:97px;width:106px;height:438px;background:linear-gradient(180deg,#6c6c6c 0%,#5c5c5c 35%,#454343 70%,#3a3838 100%)"><svg class="abs" style="left:0;top:1.3px" width="106" height="14" viewBox="0 0 106 14"><text x="3.6" y="10.6" font-size="9.6" font-weight="bold" fill="#f4f4f4" textLength="44" lengthAdjust="spacingAndGlyphs" transform="translate(0 7) scale(1 1.1) translate(0 -7)">TWS/TWD</text></svg>
<div class="rb" style="top:14.0px;height:36.5px"><div class="rv" style="top:3.0px;font-size:12.5px">16.0nd</div><div class="rv" style="top:17.5px;font-size:12.5px">au 105°T</div></div>
<div class="abs" style="left:0;top:53.5px;width:106px;height:106px;background:#595959;border:1px solid #777;border-radius:3px"></div>
<svg class="abs" style="left:0;top:0" width="106" height="440" viewBox="0 0 106 440">
<defs><radialGradient id="dg" cx="50%" cy="40%" r="60%"><stop offset="0" stop-color="#3a3636"/><stop offset="1" stop-color="#1c1a1a"/></radialGradient></defs>
<circle cx="8.0" cy="62.0" r="3.8" fill="#1e1e1e"/><path d="M5.5 62.0h5M8.0 59.5v5" stroke="#3c3c3c" stroke-width="0.8"/>
<circle cx="97.7" cy="62.0" r="3.8" fill="#1e1e1e"/><path d="M95.2 62.0h5M97.7 59.5v5" stroke="#3c3c3c" stroke-width="0.8"/>
<circle cx="8.0" cy="152.0" r="3.8" fill="#1e1e1e"/><path d="M5.5 152.0h5M8.0 149.5v5" stroke="#3c3c3c" stroke-width="0.8"/>
<circle cx="97.7" cy="152.0" r="3.8" fill="#1e1e1e"/><path d="M95.2 152.0h5M97.7 149.5v5" stroke="#3c3c3c" stroke-width="0.8"/>
<circle cx="53" cy="107" r="50" fill="#8a8a8a"/>
<circle cx="53" cy="107" r="48.8" fill="#4a4848"/>
<circle cx="53" cy="107" r="47" fill="url(#dg)"/>
<path d="M10.8 84.6A47.8 47.8 0 0 1 35.1 62.7" fill="none" stroke="#e02020" stroke-width="1.3"/>
<path d="M70.9 62.7A47.8 47.8 0 0 1 95.2 84.6" fill="none" stroke="#20b040" stroke-width="1.3"/>
<path d="M64.8 74.6L64.3 76.0M75.2 80.6L74.2 81.7M79.4 84.8L78.3 85.8M85.4 95.2L84.0 95.7M87.0 101.0L85.5 101.3M87.0 113.0L85.5 112.7M85.4 118.8L84.0 118.3M79.4 129.2L78.3 128.2M75.2 133.4L74.2 132.3M64.8 139.4L64.3 138.0M59.0 141.0L58.7 139.5M47.0 141.0L47.3 139.5M41.2 139.4L41.7 138.0M30.8 133.4L31.8 132.3M26.6 129.2L27.7 128.2M20.6 118.8L22.0 118.3M19.0 113.0L20.5 112.7M19.0 101.0L20.5 101.3M20.6 95.2L22.0 95.7M26.6 84.8L27.7 85.8M30.8 80.6L31.8 81.7M41.2 74.6L41.7 76.0" stroke="#ddd" stroke-width="1.2" stroke-linecap="round"/>
<path d="M70.5 76.7L68.5 80.2M83.3 89.5L79.8 91.5M88.0 107.0L84.0 107.0M83.3 124.5L79.8 122.5M70.5 137.3L68.5 133.8M53.0 142.0L53.0 138.0M35.5 137.3L37.5 133.8M22.7 124.5L26.2 122.5M18.0 107.0L22.0 107.0M22.7 89.5L26.2 91.5M35.5 76.7L37.5 80.2" stroke="#f0f0f0" stroke-width="1.4"/>
<text x="74.0" y="72.9" font-size="6.3" font-weight="bold" fill="#eee" text-anchor="middle">30</text>
<text x="89.4" y="88.3" font-size="6.3" font-weight="bold" fill="#eee" text-anchor="middle">60</text>
<text x="95.0" y="109.3" font-size="6.3" font-weight="bold" fill="#eee" text-anchor="middle">90</text>
<text x="89.4" y="130.3" font-size="6.3" font-weight="bold" fill="#eee" text-anchor="middle">120</text>
<text x="74.0" y="145.7" font-size="6.3" font-weight="bold" fill="#eee" text-anchor="middle">150</text>
<text x="53.0" y="152.3" font-size="6.3" font-weight="bold" fill="#eee" text-anchor="middle">180</text>
<text x="32.0" y="72.9" font-size="6.3" font-weight="bold" fill="#eee" text-anchor="middle">30</text>
<text x="16.6" y="88.3" font-size="6.3" font-weight="bold" fill="#eee" text-anchor="middle">60</text>
<text x="11.0" y="109.3" font-size="6.3" font-weight="bold" fill="#eee" text-anchor="middle">90</text>
<text x="16.6" y="130.3" font-size="6.3" font-weight="bold" fill="#eee" text-anchor="middle">120</text>
<text x="32.0" y="145.7" font-size="6.3" font-weight="bold" fill="#eee" text-anchor="middle">150</text>
<path d="M53 63C58 73 64 85 65.5 99L67 126Q67 133 62 133H44Q39 133 39 126L40.5 99C42 85 48 73 53 63Z" fill="none" stroke="#aaa" stroke-width="0.6"/>
<path d="M39 123H67" stroke="#aaa" stroke-width="0.6"/>
<rect x="30" y="99.19999999999999" width="45" height="15.6" rx="1.5" fill="#0c0c0c" stroke="#9a9a9a" stroke-width="0.8"/>
<path d="M39.60000000000002 115.6H65.60000000000002L63.60000000000002 121.6H41.60000000000002Z" fill="#141212"/>
<text x="38.200000000000045" y="111.9" font-size="14.8" fill="#f0f0f0" textLength="17.4" lengthAdjust="spacingAndGlyphs">145</text>
<text x="55.799999999999955" y="111.9" font-size="7.4" fill="#c4c4c4">.0</text>
<circle cx="67.20000000000005" cy="107.5" r="0.7" fill="#aaa"/>
<text x="53" y="120.6" font-size="4.8" font-weight="bold" fill="#e02020" text-anchor="middle">TWA</text>
<path d="M25.2 146.5Q29.0 135.0 37.3 129.3Q38.5 134.0 28.0 147.5Z" fill="none" stroke="#e81818" stroke-width="1.3"/>
</svg>
<svg class="abs" style="left:0;top:161.3px" width="106" height="14" viewBox="0 0 106 14"><text x="3.6" y="10.6" font-size="9.6" font-weight="bold" fill="#f4f4f4" textLength="55.8" lengthAdjust="spacingAndGlyphs" transform="translate(0 7) scale(1 1.1) translate(0 -7)">VITESSE CAP</text></svg>
<div class="rb" style="top:174.0px;height:37.0px"><div class="rv" style="top:2.6px;font-size:12.5px">09.9nd</div><div class="rv" style="top:17.2px;font-size:12.5px">au 250°T</div></div>
<svg class="abs" style="left:0;top:215.0px" width="106" height="14" viewBox="0 0 106 14"><text x="3.6" y="10.6" font-size="9.6" font-weight="bold" fill="#f4f4f4" textLength="52.5" lengthAdjust="spacingAndGlyphs" transform="translate(0 7) scale(1 1.1) translate(0 -7)">%VIT. CIBLE</text></svg>
<div class="rb" style="top:228.3px;height:36.4px"><svg class="abs" style="left:0;top:0" width="102" height="37" viewBox="920 325.3 102 37"><path d="M958.8 361.7V349Q958.8 346 962 346H1022V361.7Z" fill="#3a3838" stroke="#8a8a8a" stroke-width="0.7"/><text x="925" y="344.6" font-size="7.6" font-weight="bold" fill="#f0f0f0">09.9nd</text><text x="988.5" y="357" font-size="9.2" font-weight="bold" fill="#f0f0f0" text-anchor="middle">93%</text><text x="960.5" y="331.6" font-size="3.8" fill="#ddd" text-anchor="middle">0%</text><text x="973" y="331.6" font-size="3.8" fill="#ddd" text-anchor="middle">50%</text><text x="986.3" y="331.6" font-size="3.8" fill="#ddd" text-anchor="middle">100%</text><text x="999.8" y="331.6" font-size="3.8" fill="#ddd" text-anchor="middle">150%</text><text x="1012.5" y="331.6" font-size="3.8" fill="#ddd" text-anchor="middle">200%</text><path d="M960.5 337.7H1013.5M960.5 334V338.5M1013.5 334V338.5" stroke="#f4f4f4" stroke-width="1"/><path d="M961.5 336H986" stroke="#18b040" stroke-width="1.6" stroke-dasharray="1.4 1.2"/><path d="M988 336H1013" stroke="#e02020" stroke-width="1.6" stroke-dasharray="1.4 1.2"/><rect x="984.3" y="332" width="2.6" height="13.5" fill="#b0b0b0"/></svg></div>
<svg class="abs" style="left:0;top:268.0px" width="106" height="14" viewBox="0 0 106 14"><text x="3.6" y="10.6" font-size="9.6" font-weight="bold" fill="#f4f4f4" textLength="54.7" lengthAdjust="spacingAndGlyphs" transform="translate(0 7) scale(1 1.1) translate(0 -7)">ERREUR CAP</text></svg>
<div class="rb" style="top:281.5px;height:36.3px"><svg class="abs" style="left:0;top:0" width="102" height="37" viewBox="920 378.5 102 37"><text x="927" y="398" font-size="7.6" font-weight="bold" fill="#f0f0f0">250°T</text><path d="M955.9 403.3L953.9 401.9" stroke="#e82020" stroke-width="1.9"/><path d="M958.5 399.8L956.7 398.2" stroke="#e82020" stroke-width="1.9"/><path d="M961.5 396.6L959.8 394.9" stroke="#e82020" stroke-width="1.9"/><path d="M964.8 393.9L963.4 391.9" stroke="#e82020" stroke-width="1.9"/><path d="M968.4 391.5L967.2 389.4" stroke="#e82020" stroke-width="1.9"/><path d="M972.3 389.5L971.3 387.3" stroke="#18b848" stroke-width="1.9"/><path d="M976.3 388.1L975.6 385.8" stroke="#18b848" stroke-width="1.9"/><path d="M980.5 387.1L980.1 384.7" stroke="#18b848" stroke-width="1.9"/><path d="M984.8 386.6L984.7 384.2" stroke="#18b848" stroke-width="1.9"/><path d="M989.2 386.6L989.3 384.2" stroke="#18b848" stroke-width="1.9"/><path d="M993.5 387.1L993.9 384.7" stroke="#18b848" stroke-width="1.9"/><path d="M997.7 388.1L998.4 385.8" stroke="#18b848" stroke-width="1.9"/><path d="M1001.7 389.5L1002.7 387.3" stroke="#18b848" stroke-width="1.9"/><path d="M1005.6 391.5L1006.8 389.4" stroke="#e82020" stroke-width="1.9"/><path d="M1009.2 393.9L1010.6 391.9" stroke="#e82020" stroke-width="1.9"/><path d="M1012.5 396.6L1014.2 394.9" stroke="#e82020" stroke-width="1.9"/><path d="M1015.5 399.8L1017.3 398.2" stroke="#e82020" stroke-width="1.9"/><path d="M1018.1 403.3L1020.1 401.9" stroke="#e82020" stroke-width="1.9"/><path d="M955.5 405.5A36.4 36.4 0 0 1 1018.5 405.5" fill="none" stroke="#f4f4f4" stroke-width="1.6"/><path d="M957.4 406.6L953.1 404.1" stroke="#f4f4f4" stroke-width="1.1"/><path d="M1016.6 406.6L1020.9 404.1" stroke="#f4f4f4" stroke-width="1.1"/><path d="M966.5 414.8V404Q966.5 400.6 970 400.6H1003.5Q1007 400.6 1007 404V414.8" fill="#3a3838" stroke="#9a9a9a" stroke-width="0.8"/><text x="987.3" y="410" font-size="8.8" font-weight="bold" fill="#f0f0f0" text-anchor="middle">5°T</text><text x="966.5" y="388" font-size="3.8" fill="#ddd" text-anchor="middle">-20°</text><text x="988" y="383.3" font-size="3.8" fill="#ddd" text-anchor="middle">0°</text><text x="1009" y="388" font-size="3.8" fill="#ddd" text-anchor="middle">+20°</text><path d="M991.3 386L989.8 397.5" stroke="#b8b8b8" stroke-width="2.2"/></svg></div>
<svg class="abs" style="left:0;top:321.2px" width="106" height="14" viewBox="0 0 106 14"><text x="3.6" y="10.6" font-size="9.6" font-weight="bold" fill="#f4f4f4" textLength="68.4" lengthAdjust="spacingAndGlyphs" transform="translate(0 7) scale(1 1.1) translate(0 -7)">ECART LATÉRAL</text></svg>
<div class="rb" style="top:334.0px;height:36.5px"><div class="rv" style="top:9.8px;font-size:12.5px">0.00MN B</div></div>
<svg class="abs" style="left:0;top:374.6px" width="106" height="14" viewBox="0 0 106 14"><text x="3.6" y="10.6" font-size="9.6" font-weight="bold" fill="#f4f4f4" textLength="47" lengthAdjust="spacingAndGlyphs" transform="translate(0 7) scale(1 1.1) translate(0 -7)">WAYPOINT</text></svg>
<div class="rb" style="top:388.0px;height:35.8px"><div class="rv" style="top:2.0px;font-size:12.5px">436MN 245°T</div><div class="rv" style="top:16.2px;font-size:12.5px">44h24</div></div>
<div class="abs" style="left:0;top:52.0px;width:106px;height:1px;background:rgba(255,255,255,0.10)"></div>
<div class="abs" style="left:0;top:161.5px;width:106px;height:1px;background:rgba(255,255,255,0.10)"></div>
<div class="abs" style="left:0;top:214.5px;width:106px;height:1px;background:rgba(255,255,255,0.10)"></div>
<div class="abs" style="left:0;top:267.5px;width:106px;height:1px;background:rgba(255,255,255,0.10)"></div>
<div class="abs" style="left:0;top:320.5px;width:106px;height:1px;background:rgba(255,255,255,0.10)"></div>
<div class="abs" style="left:0;top:373.5px;width:106px;height:1px;background:rgba(255,255,255,0.10)"></div>
<div class="abs" style="left:0;top:427.3px;width:106px;height:1px;background:rgba(255,255,255,0.10)"></div></div>
<!-- TABSTRIPS -->
<div class="abs" style="left:24px;top:99px;width:125.5px;height:13px;background:#444"></div>
<div class="abs" style="left:24px;top:98.6px;width:125.5px;height:2.3px;background:#a9b9da"></div>
<div class="abs" style="left:151.5px;top:99px;width:77.5px;height:13px;background:#313131"></div>
<div class="abs" style="left:151.5px;top:98.6px;width:77.5px;height:2.3px;background:#e2b84e"></div>
<div class="abs ts" style="left:38.4px;top:102.4px">Carte Maître (Carte raster)</div>
<div class="abs ts" style="left:165.6px;top:102.4px">Nouvel Onglet</div>
<svg class="abs" style="left:150px;top:99px" width="330" height="13" viewBox="150 99 330 13"><path d="M157.3 102.6h2.6v2.5h2.5v2.8h-2.5v2.5h-2.6v-2.5h-2.5v-2.8h2.5z" stroke="#e4e4e4" stroke-width="0.8" fill="#222"/><rect x="157.6" y="105.4" width="2" height="2.2" fill="#bbb"/><path d="M464.6 104h4.8l-2.4 2.6z" fill="#ddd"/></svg>
<div class="abs" style="left:480px;top:99px;width:87.5px;height:13px;background:#3d3d3d"></div>
<div class="abs" style="left:480px;top:98.6px;width:87.5px;height:2.3px;background:#a9b48c"></div>
<div class="abs ts" style="left:494.8px;top:102.4px;color:#1e90e4;font-weight:bold;letter-spacing:0.12px">Polaire (Active)</div>
<svg class="abs" style="left:555px;top:99px" width="360" height="13" viewBox="555 99 360 13"><path d="M558.2 104.2L562.8 108.8M562.8 104.2L558.2 108.8" stroke="#ddd" stroke-width="0.8"/><path d="M903.8 104h4.8l-2.4 2.6z" fill="#ddd"/></svg>
<div id="status" class="abs"><span style="left:3px">Prêt</span><span style="left:677.8px">GPS</span><span style="left:715px">40°20.845 N</span><span style="left:761.3px">008°25.866 W</span><span style="left:820.6px">248MN à 009°T du bateau</span><span style="left:933.6px">pas d'info courant</span></div>
</body></html>
